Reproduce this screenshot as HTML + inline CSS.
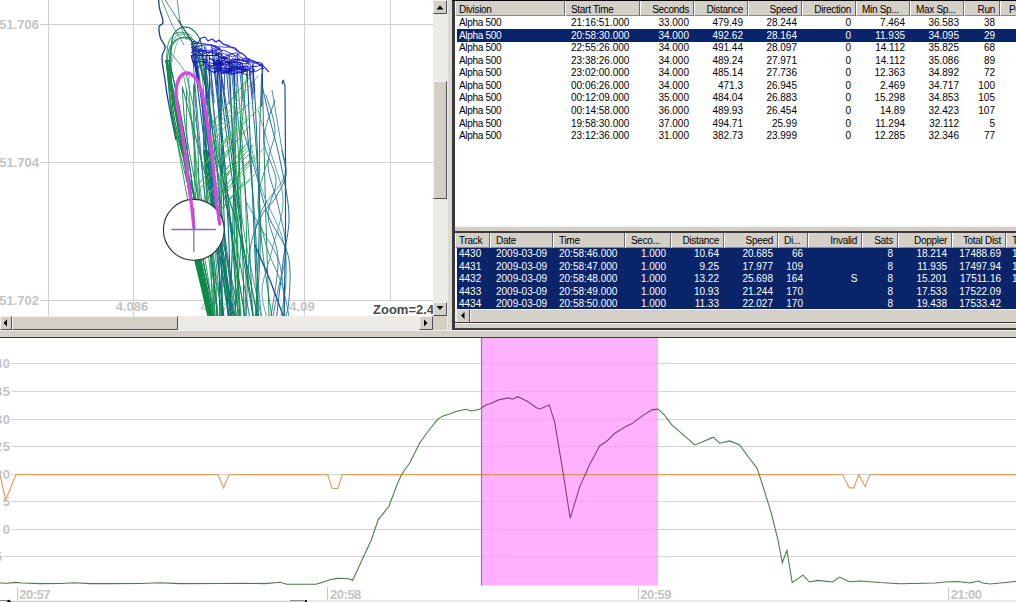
<!DOCTYPE html>
<html><head><meta charset="utf-8">
<style>
*{box-sizing:border-box}
body{margin:0;width:1016px;height:602px;overflow:hidden;position:relative;background:#d4d0c8;font-family:"Liberation Sans",sans-serif}
.a{position:absolute}
.chk{background-color:#e6e3dc;background-image:linear-gradient(45deg,#f4f3ef 25%,transparent 25%,transparent 75%,#f4f3ef 75%),linear-gradient(45deg,#f4f3ef 25%,transparent 25%,transparent 75%,#f4f3ef 75%);background-size:2px 2px;background-position:0 0,1px 1px}
.btn{background:#d4d0c8;border-top:1px solid #f4f2ee;border-left:1px solid #f4f2ee;border-right:1px solid #505050;border-bottom:1px solid #505050}
.hc{background:#d4d0c8;border-left:1px solid #fff;border-right:1px solid #6a6a6a;border-bottom:1px solid #8a8a8a}
.tx{font-size:10px;line-height:12px;height:12px;white-space:nowrap;color:#000}
.sel{background:#0a246a}
.gl{font-size:13px;line-height:13px;color:#c4c4c4;font-weight:bold;white-space:nowrap}
</style></head><body>
<div class="a" style="left:0;top:0;width:1016px;height:602px;overflow:hidden">

<div class="a" style="left:0;top:0;width:433px;height:316px;background:#fff;overflow:hidden">
<svg width="433" height="316" style="position:absolute;left:0;top:0">
<line x1="48.5" y1="0" x2="48.5" y2="316" stroke="#d0d0d0" stroke-width="1"/>
<line x1="133.5" y1="0" x2="133.5" y2="316" stroke="#d0d0d0" stroke-width="1"/>
<line x1="219.5" y1="0" x2="219.5" y2="316" stroke="#d0d0d0" stroke-width="1"/>
<line x1="304.5" y1="0" x2="304.5" y2="316" stroke="#d0d0d0" stroke-width="1"/>
<line x1="390.5" y1="0" x2="390.5" y2="316" stroke="#d0d0d0" stroke-width="1"/>
<line x1="40" y1="24.5" x2="433" y2="24.5" stroke="#d0d0d0" stroke-width="1"/>
<line x1="40" y1="162.5" x2="433" y2="162.5" stroke="#d0d0d0" stroke-width="1"/>
<line x1="40" y1="300.5" x2="433" y2="300.5" stroke="#d0d0d0" stroke-width="1"/>
</svg>
<div class="a gl" style="right:394px;top:18.0px">51.706</div>
<div class="a gl" style="right:394px;top:156.0px">51.704</div>
<div class="a gl" style="right:394px;top:294.0px">51.702</div>
<div class="a gl" style="left:92px;width:80px;text-align:center;top:300px">4.086</div>
<div class="a gl" style="left:177px;width:80px;text-align:center;top:300px">4.088</div>
<div class="a gl" style="left:262px;width:80px;text-align:center;top:300px">4.09</div>
<div class="a gl" style="left:348px;width:80px;text-align:center;top:300px">4.092</div>
<svg width="433" height="316" style="position:absolute;left:0;top:0">
<defs>
<linearGradient id="gA" gradientUnits="userSpaceOnUse" x1="0" y1="0" x2="0" y2="316"><stop offset="0" stop-color="#1a6a80"/><stop offset="0.25" stop-color="#0a7a60"/><stop offset="0.5" stop-color="#0a8a48"/><stop offset="1" stop-color="#0a8a40"/></linearGradient>
<linearGradient id="gB" gradientUnits="userSpaceOnUse" x1="0" y1="0" x2="0" y2="316"><stop offset="0.12" stop-color="#1818c8"/><stop offset="0.26" stop-color="#1a4aa8"/><stop offset="0.45" stop-color="#0a7078"/><stop offset="1" stop-color="#0a8060"/></linearGradient>
<linearGradient id="gC" gradientUnits="userSpaceOnUse" x1="0" y1="0" x2="0" y2="316"><stop offset="0.12" stop-color="#1020c0"/><stop offset="0.3" stop-color="#10609a"/><stop offset="1" stop-color="#10708a"/></linearGradient>
<linearGradient id="gD" gradientUnits="userSpaceOnUse" x1="0" y1="0" x2="0" y2="316"><stop offset="0" stop-color="#1a70a0"/><stop offset="0.3" stop-color="#18a050"/><stop offset="1" stop-color="#18a048"/></linearGradient>
<linearGradient id="gE" gradientUnits="userSpaceOnUse" x1="0" y1="0" x2="0" y2="316"><stop offset="0.1" stop-color="#2030b0"/><stop offset="0.35" stop-color="#0a6a78"/><stop offset="1" stop-color="#0a7a58"/></linearGradient>
</defs>
<polyline fill="none" stroke="#203a88" stroke-width="1.30" stroke-opacity="1.0" stroke-linejoin="round" points="158.5,-2.0 158.6,-0.7 158.7,1.1 158.9,3.2 159.1,5.6 159.5,8.0 160.2,10.7 161.1,13.7 162.0,16.9 162.7,19.7 163.0,22.0 162.6,23.5 161.7,24.4 160.6,25.0 159.6,25.8 159.0,27.0 158.9,28.8 159.1,31.1 159.4,33.5 159.9,35.8 160.5,38.0 161.3,39.9 162.4,41.6 163.6,43.4 164.5,45.1 165.0,47.0 164.8,48.9 164.1,50.7 163.1,52.7 162.3,55.1 162.0,58.0 162.2,61.7 162.8,66.1 163.5,70.8 164.3,75.6 165.0,80.0 165.5,83.8 166.0,87.2 166.4,90.7 167.1,94.8 168.0,100.0 169.4,107.4 171.2,116.5 173.1,125.9 174.8,134.2 176.0,140.0"/>
<polyline fill="none" stroke="#3a7a80" stroke-width="0.90" stroke-opacity="1.0" stroke-linejoin="round" points="164.0,-2.0 178.0,20.0 191.0,40.0 197.0,52.0"/>
<polyline fill="none" stroke="#3a8a80" stroke-width="0.90" stroke-opacity="1.0" stroke-linejoin="round" points="177.0,-2.0 179.0,15.0 182.0,30.0 187.0,40.0"/>
<polyline fill="none" stroke="#407a80" stroke-width="0.80" stroke-opacity="1.0" stroke-linejoin="round" points="161.0,-2.0 172.0,25.0 184.0,45.0"/>
<polyline fill="none" stroke="#20a050" stroke-width="0.87" stroke-opacity="1.0" stroke-linejoin="round" points="194.4,210.0 192.3,199.7 189.3,185.2 185.8,168.1 182.2,150.4 178.9,133.7 176.4,120.0 174.6,109.1 173.2,99.4 172.1,90.9 171.3,83.3 170.7,76.4 170.2,70.0 169.9,64.3 169.9,59.6 170.0,55.5 170.3,52.0 170.7,48.9 171.2,46.0 171.8,43.4 172.6,41.3 173.4,39.6 174.4,38.2 175.3,37.0 176.3,36.0 177.2,35.1 178.2,34.5 179.3,34.2 180.3,34.0 181.3,33.9 182.4,34.0 183.4,34.1 184.4,34.3 185.4,34.7 186.4,35.2 187.4,36.0 188.4,37.0 189.5,38.3 190.6,39.9 191.7,41.8 192.7,43.8 193.7,45.9 194.5,48.0 195.2,49.9 195.7,51.7 196.1,53.6 196.6,55.8 197.0,58.5 197.5,62.0 198.1,66.0 198.7,70.4 199.4,75.3 200.0,80.9 200.8,87.4 201.5,95.0 202.2,103.8 202.8,113.7 203.4,124.6 204.3,136.0 205.4,147.9 206.9,160.0 209.1,172.4 211.8,185.5 214.8,198.9 217.9,212.6 220.9,226.4 223.5,240.0 226.0,254.5 228.4,270.2 230.8,286.0 232.9,300.7 234.7,313.1 236.0,322.0"/>
<polyline fill="none" stroke="#108048" stroke-width="1.17" stroke-opacity="1.0" stroke-linejoin="round" points="197.4,210.0 194.7,199.7 190.8,185.2 186.3,168.1 181.7,150.4 177.6,133.7 174.7,120.0 172.9,109.1 171.9,99.7 171.4,91.3 171.2,83.8 171.2,76.8 171.1,70.0 170.9,63.5 170.9,57.5 171.0,52.1 171.2,47.2 171.6,42.9 172.1,39.2 172.8,36.2 173.8,34.0 174.9,32.4 176.1,31.1 177.3,30.1 178.4,29.2 179.6,28.3 180.8,27.7 182.1,27.3 183.3,27.2 184.6,27.1 185.8,27.2 187.0,27.3 188.2,27.5 189.5,27.8 190.7,28.4 191.9,29.1 193.1,30.2 194.4,31.4 195.7,32.9 197.1,34.5 198.4,36.5 199.5,38.7 200.5,41.2 201.2,43.9 201.8,46.9 202.2,50.2 202.6,53.8 203.0,57.7 203.5,62.0 204.0,66.4 204.5,70.9 205.0,75.7 205.6,81.2 206.4,87.5 207.5,95.0 208.7,103.8 210.0,113.7 211.5,124.6 213.3,136.0 215.4,147.9 217.9,160.0 221.1,172.4 224.9,185.5 229.1,198.9 233.4,212.6 237.5,226.4 241.2,240.0 244.6,254.5 248.1,270.2 251.4,286.0 254.3,300.7 256.8,313.1 258.6,322.0"/>
<polyline fill="none" stroke="#1a9a58" stroke-width="1.02" stroke-opacity="1.0" stroke-linejoin="round" points="194.0,210.0 191.5,199.7 187.9,185.2 183.6,168.1 179.4,150.4 175.5,133.7 172.7,120.0 170.9,109.0 169.7,99.3 168.9,90.6 168.5,83.0 168.2,76.1 167.9,70.0 167.7,64.8 167.6,60.7 167.7,57.5 167.9,54.8 168.4,52.4 168.9,49.9 169.7,47.6 170.8,45.6 172.0,43.8 173.3,42.3 174.6,41.0 175.9,39.9 177.1,39.1 178.4,38.5 179.8,38.1 181.1,37.9 182.5,37.9 183.8,37.9 185.1,38.1 186.4,38.3 187.8,38.6 189.1,39.2 190.4,39.9 191.7,40.9 193.1,42.3 194.5,44.1 196.0,46.0 197.4,48.1 198.6,50.1 199.6,51.9 200.4,53.4 201.0,54.5 201.4,55.6 201.8,57.0 202.1,59.0 202.6,62.0 203.2,65.8 203.7,70.1 204.3,75.1 205.0,80.8 205.7,87.4 206.6,95.0 207.6,103.8 208.6,113.7 209.8,124.6 211.1,136.0 212.8,147.9 214.9,160.0 217.7,172.4 221.0,185.5 224.7,198.9 228.4,212.6 232.0,226.4 235.3,240.0 238.3,254.5 241.3,270.2 244.2,286.0 246.8,300.7 248.9,313.1 250.5,322.0"/>
<polyline fill="none" stroke="#0e8a50" stroke-width="0.98" stroke-opacity="1.0" stroke-linejoin="round" points="199.2,210.0 196.2,199.7 191.7,185.2 186.4,168.1 181.2,150.4 176.5,133.7 173.2,120.0 171.3,109.0 170.2,99.3 169.8,90.7 169.8,83.0 169.9,76.2 169.8,70.0 169.7,64.7 169.6,60.5 169.7,57.2 169.9,54.3 170.3,51.8 170.8,49.3 171.6,46.9 172.7,44.9 173.9,43.1 175.2,41.7 176.5,40.4 177.8,39.3 179.0,38.5 180.3,37.9 181.7,37.5 183.0,37.3 184.4,37.3 185.7,37.3 187.0,37.4 188.3,37.7 189.7,38.0 191.0,38.5 192.3,39.3 193.6,40.3 195.0,41.7 196.5,43.4 197.9,45.3 199.3,47.4 200.5,49.4 201.6,51.3 202.3,52.9 202.9,54.1 203.3,55.3 203.7,56.8 204.1,58.9 204.6,62.0 205.2,65.8 206.1,70.2 207.0,75.1 207.7,80.8 208.3,87.4 208.6,95.0 208.3,103.8 207.6,113.7 206.8,124.6 205.9,136.0 205.2,147.9 205.0,160.0 205.4,172.4 206.0,185.5 206.9,198.9 207.9,212.6 208.9,226.4 209.7,240.0 210.4,254.5 211.1,270.2 211.7,286.0 212.3,300.7 212.8,313.1 213.2,322.0"/>
<polyline fill="none" stroke="#108048" stroke-width="0.83" stroke-opacity="1.0" stroke-linejoin="round" points="189.5,210.0 187.6,199.7 185.0,185.2 181.9,168.1 178.7,150.4 175.8,133.7 173.5,120.0 171.8,109.1 170.4,99.5 169.3,91.0 168.3,83.4 167.6,76.5 167.1,70.0 166.8,64.1 166.7,59.1 166.8,54.7 167.1,50.8 167.5,47.4 168.1,44.3 168.8,41.7 169.8,39.5 170.9,37.9 172.1,36.5 173.3,35.4 174.5,34.3 175.7,33.5 176.9,32.9 178.2,32.5 179.4,32.3 180.7,32.3 182.0,32.3 183.2,32.4 184.4,32.7 185.7,33.0 186.9,33.6 188.1,34.3 189.4,35.3 190.7,36.6 192.0,38.2 193.4,40.0 194.7,42.0 195.8,44.1 196.8,46.3 197.6,48.5 198.1,50.6 198.5,52.8 198.9,55.3 199.3,58.3 199.8,62.0 200.5,66.1 201.2,70.5 202.0,75.4 202.7,81.0 203.3,87.4 203.8,95.0 204.0,103.8 203.9,113.7 203.6,124.6 203.5,136.0 203.6,147.9 204.2,160.0 205.3,172.4 206.8,185.5 208.6,198.9 210.5,212.6 212.4,226.4 214.0,240.0 215.4,254.5 216.9,270.2 218.3,286.0 219.5,300.7 220.6,313.1 221.3,322.0"/>
<polyline fill="none" stroke="#70b0a8" stroke-width="0.80" stroke-opacity="1.0" stroke-linejoin="round" points="172.0,62.0 172.6,59.4 173.5,55.7 174.5,51.4 175.6,47.0 176.8,43.1 178.0,40.0 179.2,37.8 180.6,36.2 181.9,34.9 183.3,34.0 184.7,33.4 186.0,33.0 187.3,33.0 188.7,33.4 190.0,34.1 191.2,34.9 192.2,35.6 193.0,36.0"/>
<polyline fill="none" stroke="#3a8a80" stroke-width="0.80" stroke-opacity="1.0" stroke-linejoin="round" points="165.0,45.0 178.0,62.0 190.0,78.0"/>
<polyline fill="none" stroke="#0a8a48" stroke-width="0.95" stroke-opacity="1.0" stroke-linejoin="round" points="166.2,60.0 166.5,61.9 166.9,64.4 167.4,67.5 168.0,71.1 168.7,75.3 169.6,80.0 170.7,85.5 172.0,91.9 173.4,98.8 174.8,105.9 176.3,113.1 177.6,120.0 178.8,126.7 180.0,133.3 181.2,140.0 182.4,146.7 183.5,153.3 184.6,160.0 185.6,166.5 186.6,172.8 187.6,179.1 188.6,185.6 189.6,192.5 190.7,200.0 192.0,208.5 193.3,217.9 194.7,227.7 196.1,237.4 197.5,246.7 198.9,255.0 200.3,262.3 201.7,268.9 203.2,275.1 204.6,280.9 206.0,286.4 207.2,292.0 208.2,297.8 209.3,303.6 210.2,309.3 211.1,314.5 211.8,318.8 212.3,322.0"/>
<polyline fill="none" stroke="#0a7a58" stroke-width="0.98" stroke-opacity="1.0" stroke-linejoin="round" points="167.1,60.0 167.5,61.9 168.0,64.4 168.6,67.5 169.3,71.1 170.2,75.3 171.1,80.0 172.2,85.5 173.5,91.9 174.9,98.8 176.4,105.9 177.8,113.1 179.1,120.0 180.4,126.7 181.6,133.3 182.7,140.0 183.9,146.7 185.0,153.3 186.1,160.0 187.2,166.5 188.1,172.8 189.1,179.1 190.0,185.6 191.0,192.5 192.1,200.0 193.3,208.5 194.6,217.9 196.0,227.7 197.4,237.4 198.7,246.7 200.1,255.0 201.5,262.3 202.9,268.9 204.3,275.1 205.6,280.9 206.9,286.4 208.1,292.0 209.1,297.8 210.1,303.6 211.1,309.3 211.9,314.5 212.6,318.8 213.1,322.0"/>
<polyline fill="none" stroke="#0a7a58" stroke-width="1.02" stroke-opacity="1.0" stroke-linejoin="round" points="168.5,60.0 169.1,61.9 169.7,64.4 170.6,67.5 171.5,71.1 172.5,75.3 173.6,80.0 174.8,85.5 176.1,91.9 177.5,98.8 178.9,105.9 180.3,113.1 181.6,120.0 182.8,126.7 184.0,133.3 185.2,140.0 186.4,146.7 187.5,153.3 188.6,160.0 189.6,166.5 190.5,172.8 191.4,179.1 192.3,185.6 193.3,192.5 194.3,200.0 195.5,208.5 196.8,217.9 198.1,227.7 199.4,237.4 200.8,246.7 202.1,255.0 203.4,262.3 204.7,268.9 206.0,275.1 207.3,280.9 208.5,286.4 209.5,292.0 210.6,297.8 211.5,303.6 212.4,309.3 213.2,314.5 213.8,318.8 214.3,322.0"/>
<polyline fill="none" stroke="#0a7a58" stroke-width="1.03" stroke-opacity="1.0" stroke-linejoin="round" points="168.6,60.0 169.2,61.9 169.9,64.4 170.7,67.5 171.6,71.1 172.7,75.3 173.7,80.0 174.9,85.5 176.2,91.9 177.6,98.8 179.0,105.9 180.4,113.1 181.7,120.0 183.0,126.7 184.2,133.3 185.4,140.0 186.5,146.7 187.7,153.3 188.7,160.0 189.8,166.5 190.7,172.8 191.6,179.1 192.5,185.6 193.4,192.5 194.5,200.0 195.6,208.5 196.9,217.9 198.2,227.7 199.6,237.4 200.9,246.7 202.2,255.0 203.5,262.3 204.8,268.9 206.1,275.1 207.4,280.9 208.6,286.4 209.6,292.0 210.6,297.8 211.6,303.6 212.5,309.3 213.3,314.5 213.9,318.8 214.4,322.0"/>
<polyline fill="none" stroke="#0e9048" stroke-width="0.91" stroke-opacity="1.0" stroke-linejoin="round" points="167.1,60.0 167.5,61.9 168.0,64.4 168.6,67.5 169.4,71.1 170.2,75.3 171.2,80.0 172.3,85.5 173.6,91.9 175.0,98.8 176.4,105.9 177.8,113.1 179.2,120.0 180.4,126.7 181.6,133.3 182.8,140.0 183.9,146.7 185.1,153.3 186.2,160.0 187.2,166.5 188.2,172.8 189.1,179.1 190.0,185.6 191.0,192.5 192.1,200.0 193.4,208.5 194.7,217.9 196.0,227.7 197.4,237.4 198.8,246.7 200.1,255.0 201.5,262.3 202.9,268.9 204.3,275.1 205.7,280.9 206.9,286.4 208.1,292.0 209.2,297.8 210.2,303.6 211.1,309.3 211.9,314.5 212.6,318.8 213.1,322.0"/>
<polyline fill="none" stroke="#0a7a58" stroke-width="0.90" stroke-opacity="1.0" stroke-linejoin="round" points="165.8,60.0 166.1,61.9 166.5,64.4 166.9,67.5 167.5,71.1 168.2,75.3 169.0,80.0 170.1,85.5 171.4,91.9 172.8,98.8 174.2,105.9 175.7,113.1 177.0,120.0 178.2,126.7 179.5,133.3 180.6,140.0 181.8,146.7 182.9,153.3 184.0,160.0 185.1,166.5 186.1,172.8 187.0,179.1 188.0,185.6 189.1,192.5 190.2,200.0 191.5,208.5 192.8,217.9 194.2,227.7 195.6,237.4 197.0,246.7 198.4,255.0 199.8,262.3 201.3,268.9 202.8,275.1 204.2,280.9 205.6,286.4 206.8,292.0 207.9,297.8 209.0,303.6 209.9,309.3 210.8,314.5 211.5,318.8 212.0,322.0"/>
<polyline fill="none" stroke="#108050" stroke-width="1.13" stroke-opacity="1.0" stroke-linejoin="round" points="165.7,60.0 166.0,61.9 166.4,64.4 166.8,67.5 167.4,71.1 168.0,75.3 168.9,80.0 170.0,85.5 171.2,91.9 172.6,98.8 174.1,105.9 175.6,113.1 176.9,120.0 178.1,126.7 179.3,133.3 180.5,140.0 181.6,146.7 182.8,153.3 183.9,160.0 184.9,166.5 185.9,172.8 186.9,179.1 187.9,185.6 189.0,192.5 190.1,200.0 191.3,208.5 192.7,217.9 194.1,227.7 195.5,237.4 196.9,246.7 198.3,255.0 199.7,262.3 201.2,268.9 202.7,275.1 204.2,280.9 205.5,286.4 206.7,292.0 207.8,297.8 208.9,303.6 209.9,309.3 210.7,314.5 211.4,318.8 211.9,322.0"/>
<polyline fill="none" stroke="#0a8a48" stroke-width="0.97" stroke-opacity="1.0" stroke-linejoin="round" points="166.6,60.0 166.9,61.9 167.4,64.4 167.9,67.5 168.6,71.1 169.3,75.3 170.3,80.0 171.3,85.5 172.6,91.9 174.0,98.8 175.5,105.9 176.9,113.1 178.3,120.0 179.5,126.7 180.7,133.3 181.9,140.0 183.0,146.7 184.2,153.3 185.3,160.0 186.3,166.5 187.3,172.8 188.2,179.1 189.2,185.6 190.2,192.5 191.3,200.0 192.6,208.5 193.9,217.9 195.2,227.7 196.6,237.4 198.0,246.7 199.4,255.0 200.8,262.3 202.2,268.9 203.7,275.1 205.1,280.9 206.4,286.4 207.6,292.0 208.6,297.8 209.7,303.6 210.6,309.3 211.4,314.5 212.1,318.8 212.6,322.0"/>
<polyline fill="none" stroke="#0e9048" stroke-width="1.23" stroke-opacity="1.0" stroke-linejoin="round" points="166.1,60.0 166.4,61.9 166.8,64.4 167.2,67.5 167.8,71.1 168.6,75.3 169.4,80.0 170.5,85.5 171.8,91.9 173.2,98.8 174.7,105.9 176.1,113.1 177.4,120.0 178.7,126.7 179.9,133.3 181.1,140.0 182.2,146.7 183.3,153.3 184.4,160.0 185.5,166.5 186.5,172.8 187.4,179.1 188.4,185.6 189.5,192.5 190.6,200.0 191.8,208.5 193.2,217.9 194.5,227.7 195.9,237.4 197.4,246.7 198.7,255.0 200.2,262.3 201.6,268.9 203.1,275.1 204.5,280.9 205.9,286.4 207.1,292.0 208.2,297.8 209.2,303.6 210.2,309.3 211.0,314.5 211.7,318.8 212.2,322.0"/>
<polyline fill="none" stroke="#0e8a48" stroke-width="5.50" stroke-opacity="1.0" stroke-linejoin="round" points="196.0,256.0 203.0,285.0 211.0,320.0"/>
<polyline fill="none" stroke="#0a7a58" stroke-width="1.37" stroke-opacity="1.0" stroke-linejoin="round" points="204.0,150.0 204.7,155.4 205.8,163.0 207.0,171.9 208.3,181.5 209.7,191.1 211.0,200.0 212.3,208.4 213.7,217.0 215.1,225.6 216.4,234.1 217.8,242.2 219.0,250.0 220.1,257.3 221.2,264.4 222.2,271.1 223.1,277.6 224.1,283.9 225.0,290.0 225.9,296.2 226.9,302.4 227.9,308.5 228.7,314.0 229.5,318.6 230.0,322.0"/>
<polyline fill="none" stroke="#0a8a48" stroke-width="1.03" stroke-opacity="1.0" stroke-linejoin="round" points="203.5,150.0 204.2,155.4 205.3,163.0 206.5,171.9 207.8,181.5 209.2,191.1 210.5,200.0 211.8,208.4 213.1,217.0 214.5,225.6 215.9,234.1 217.2,242.2 218.5,250.0 219.6,257.3 220.7,264.4 221.7,271.1 222.6,277.6 223.6,283.9 224.5,290.0 225.4,296.2 226.4,302.4 227.3,308.5 228.2,314.0 228.9,318.6 229.5,322.0"/>
<polyline fill="none" stroke="#10a050" stroke-width="1.15" stroke-opacity="1.0" stroke-linejoin="round" points="206.9,150.0 207.6,155.4 208.7,163.0 209.9,171.9 211.2,181.5 212.6,191.1 213.9,200.0 215.2,208.4 216.5,217.0 217.9,225.6 219.3,234.1 220.7,242.2 221.9,250.0 223.0,257.3 224.1,264.4 225.1,271.1 226.0,277.6 227.0,283.9 227.9,290.0 228.8,296.2 229.8,302.4 230.8,308.5 231.6,314.0 232.3,318.6 232.9,322.0"/>
<polyline fill="none" stroke="#0a7a58" stroke-width="1.21" stroke-opacity="1.0" stroke-linejoin="round" points="206.1,150.0 206.9,155.4 207.9,163.0 209.1,171.9 210.4,181.5 211.8,191.1 213.1,200.0 214.4,208.4 215.8,217.0 217.2,225.6 218.5,234.1 219.9,242.2 221.1,250.0 222.2,257.3 223.3,264.4 224.3,271.1 225.2,277.6 226.2,283.9 227.1,290.0 228.0,296.2 229.0,302.4 230.0,308.5 230.8,314.0 231.6,318.6 232.1,322.0"/>
<polyline fill="none" stroke="#0a8a48" stroke-width="1.16" stroke-opacity="1.0" stroke-linejoin="round" points="205.9,150.0 206.7,155.4 207.7,163.0 208.9,171.9 210.3,181.5 211.6,191.1 212.9,200.0 214.2,208.4 215.6,217.0 217.0,225.6 218.4,234.1 219.7,242.2 220.9,250.0 222.1,257.3 223.1,264.4 224.1,271.1 225.1,277.6 226.0,283.9 226.9,290.0 227.9,296.2 228.9,302.4 229.8,308.5 230.7,314.0 231.4,318.6 231.9,322.0"/>
<polyline fill="none" stroke="#0a7a58" stroke-width="1.24" stroke-opacity="1.0" stroke-linejoin="round" points="207.9,150.0 208.7,155.4 209.7,163.0 210.9,171.9 212.3,181.5 213.6,191.1 214.9,200.0 216.2,208.4 217.6,217.0 219.0,225.6 220.4,234.1 221.7,242.2 222.9,250.0 224.1,257.3 225.1,264.4 226.1,271.1 227.1,277.6 228.0,283.9 228.9,290.0 229.9,296.2 230.9,302.4 231.8,308.5 232.7,314.0 233.4,318.6 233.9,322.0"/>
<polyline fill="none" stroke="#1a9a58" stroke-width="0.93" stroke-opacity="1.0" stroke-linejoin="round" points="194.1,82.3 194.1,85.7 194.0,90.1 193.9,95.2 193.8,101.1 193.8,107.5 193.8,114.5 194.0,121.8 194.2,129.4 194.6,137.6 194.9,146.7 195.4,156.5 195.9,166.7 196.6,176.9 197.4,186.9 198.3,196.3 199.4,205.0 200.8,212.8 202.6,220.0 204.5,226.8 206.6,233.4 208.7,239.8 210.5,246.2 212.1,252.9 213.2,260.0 213.8,267.8 214.0,276.5 214.0,285.5 213.8,294.4 213.4,303.0 213.1,310.7 212.8,317.2 212.6,322.0"/>
<polyline fill="none" stroke="#1a9a58" stroke-width="0.93" stroke-opacity="1.0" stroke-linejoin="round" points="186.5,88.5 186.5,91.8 186.5,95.9 186.4,100.8 186.4,106.3 186.4,112.4 186.4,119.0 186.5,125.9 186.8,133.1 187.1,140.9 187.4,149.6 187.8,158.8 188.3,168.4 188.9,178.1 189.5,187.6 190.4,196.6 191.4,205.0 192.7,212.6 194.3,219.8 196.0,226.6 197.9,233.1 199.8,239.6 201.7,246.2 203.4,252.9 205.0,260.0 206.4,267.8 207.9,276.5 209.3,285.5 210.6,294.4 211.9,303.0 213.0,310.7 213.9,317.2 214.6,322.0"/>
<polyline fill="none" stroke="#20a050" stroke-width="0.81" stroke-opacity="1.0" stroke-linejoin="round" points="182.7,71.7 183.5,75.5 184.5,80.2 185.7,85.9 187.1,92.3 188.5,99.3 189.8,106.9 191.1,114.8 192.2,123.0 193.1,132.0 193.8,142.0 194.4,152.7 195.0,163.8 195.6,174.9 196.4,185.7 197.3,195.8 198.5,205.0 199.9,213.1 201.7,220.5 203.6,227.3 205.6,233.7 207.7,240.0 209.7,246.4 211.6,253.0 213.3,260.0 214.8,267.8 216.4,276.5 217.9,285.5 219.3,294.4 220.5,303.0 221.7,310.7 222.6,317.2 223.4,322.0"/>
<polyline fill="none" stroke="#2a7a80" stroke-width="1.04" stroke-opacity="1.0" stroke-linejoin="round" points="182.2,86.3 183.1,89.6 184.2,93.8 185.6,98.8 187.1,104.4 188.8,110.7 190.5,117.4 192.4,124.4 194.3,131.8 196.3,139.7 198.6,148.5 200.9,158.0 203.4,167.8 205.9,177.6 208.3,187.3 210.6,196.5 212.8,205.0 214.8,212.7 216.7,219.9 218.6,226.7 220.4,233.2 222.1,239.7 223.9,246.2 225.6,252.9 227.3,260.0 229.1,267.8 231.1,276.5 233.0,285.5 235.0,294.4 236.8,303.0 238.4,310.7 239.7,317.2 240.8,322.0"/>
<polyline fill="none" stroke="#108a60" stroke-width="0.98" stroke-opacity="1.0" stroke-linejoin="round" points="194.1,85.0 194.4,88.4 194.7,92.6 195.1,97.7 195.5,103.4 196.0,109.7 196.5,116.5 196.9,123.6 197.4,131.0 197.7,139.1 198.0,148.0 198.2,157.5 198.4,167.4 198.7,177.4 199.1,187.2 199.8,196.5 200.7,205.0 201.9,212.7 203.6,219.9 205.4,226.7 207.4,233.2 209.4,239.7 211.3,246.2 212.9,252.9 214.1,260.0 215.0,267.8 215.6,276.5 216.1,285.5 216.3,294.4 216.5,303.0 216.6,310.7 216.7,317.2 216.8,322.0"/>
<polyline fill="none" stroke="#2a7a80" stroke-width="0.99" stroke-opacity="1.0" stroke-linejoin="round" points="182.2,88.0 182.5,91.3 182.7,95.4 183.0,100.3 183.4,105.9 183.8,112.0 184.4,118.6 185.2,125.6 186.2,132.8 187.4,140.6 188.9,149.3 190.6,158.6 192.4,168.3 194.2,178.0 196.1,187.5 197.9,196.6 199.6,205.0 201.2,212.6 202.9,219.8 204.6,226.6 206.3,233.1 207.9,239.6 209.3,246.2 210.6,252.9 211.7,260.0 212.6,267.8 213.2,276.5 213.7,285.5 214.0,294.4 214.3,303.0 214.5,310.7 214.7,317.2 214.8,322.0"/>
<polyline fill="none" stroke="#0e8a50" stroke-width="0.84" stroke-opacity="1.0" stroke-linejoin="round" points="193.6,84.6 193.6,88.0 193.6,92.2 193.6,97.3 193.7,103.0 193.7,109.4 193.7,116.2 193.8,123.3 194.0,130.8 194.1,138.8 194.2,147.8 194.2,157.4 194.3,167.3 194.5,177.3 194.9,187.1 195.5,196.4 196.4,205.0 197.7,212.7 199.2,219.9 201.1,226.7 203.0,233.3 205.1,239.7 207.2,246.2 209.2,252.9 211.0,260.0 212.9,267.8 214.8,276.5 216.8,285.5 218.7,294.4 220.5,303.0 222.1,310.7 223.5,317.2 224.5,322.0"/>
<polyline fill="none" stroke="#2a7a80" stroke-width="0.84" stroke-opacity="1.0" stroke-linejoin="round" points="186.4,74.7 187.1,78.3 188.2,83.0 189.4,88.5 190.8,94.7 192.3,101.6 193.8,109.0 195.2,116.8 196.5,124.8 197.8,133.6 199.0,143.3 200.3,153.8 201.6,164.6 202.8,175.4 203.9,186.0 205.0,196.0 206.0,205.0 206.9,213.0 207.7,220.4 208.4,227.2 209.1,233.6 209.7,240.0 210.4,246.3 211.0,253.0 211.8,260.0 212.6,267.8 213.5,276.5 214.5,285.5 215.5,294.4 216.4,303.0 217.2,310.7 217.9,317.2 218.4,322.0"/>
<polyline fill="none" stroke="#20a050" stroke-width="0.86" stroke-opacity="1.0" stroke-linejoin="round" points="188.6,78.1 188.8,81.7 189.0,86.2 189.3,91.5 189.6,97.6 190.0,104.3 190.5,111.5 191.1,119.0 191.9,126.9 192.9,135.4 194.1,144.9 195.4,155.0 196.9,165.5 198.4,176.1 199.8,186.4 201.2,196.1 202.3,205.0 203.4,212.9 204.3,220.2 205.1,227.0 205.9,233.5 206.7,239.9 207.4,246.3 208.2,252.9 209.0,260.0 209.9,267.8 210.9,276.5 211.9,285.5 212.9,294.4 213.9,303.0 214.8,310.7 215.5,317.2 216.0,322.0"/>
<polyline fill="none" stroke="url(#gB)" stroke-width="1.07" stroke-opacity="1.0" stroke-linejoin="round" points="247.1,68.2 247.2,71.8 247.4,76.3 247.6,81.5 247.9,87.3 248.2,93.7 248.5,100.5 248.8,107.6 249.1,114.9 249.4,122.2 249.7,129.6 250.0,136.8 250.3,143.8 250.6,150.7 250.9,157.7 251.2,164.9 251.5,172.1 251.8,179.5 252.2,186.9 252.5,194.4 252.8,201.9 253.1,209.4 253.4,216.9 253.7,224.4 254.1,231.9 254.4,239.6 254.7,247.8 255.1,256.4 255.4,265.1 255.8,273.9 256.1,282.4 256.4,290.7 256.8,298.6 257.0,305.8 257.3,312.2 257.5,317.6 257.7,322.0"/>
<polyline fill="none" stroke="url(#gE)" stroke-width="1.09" stroke-opacity="1.0" stroke-linejoin="round" points="195.1,56.4 195.7,60.2 196.4,64.9 197.3,70.3 198.2,76.5 199.3,83.1 200.4,90.2 201.6,97.6 202.7,105.3 203.9,113.0 205.0,120.7 206.1,128.2 207.0,135.5 208.0,142.7 209.0,150.1 210.0,157.6 211.0,165.2 212.0,172.9 212.9,180.7 213.9,188.5 214.8,196.4 215.6,204.2 216.4,212.1 217.1,220.0 217.7,227.8 218.1,235.8 218.5,244.4 218.9,253.4 219.1,262.5 219.3,271.7 219.5,280.6 219.6,289.3 219.6,297.5 219.7,305.0 219.8,311.7 219.8,317.4 219.9,322.0"/>
<polyline fill="none" stroke="url(#gE)" stroke-width="1.14" stroke-opacity="1.0" stroke-linejoin="round" points="234.4,61.5 234.4,65.2 234.4,69.7 234.4,75.1 234.3,81.1 234.3,87.6 234.3,94.6 234.3,101.9 234.2,109.3 234.2,116.9 234.1,124.4 234.1,131.9 234.0,139.0 234.0,146.1 233.9,153.3 233.8,160.7 233.8,168.1 233.7,175.7 233.6,183.3 233.5,191.0 233.4,198.7 233.3,206.4 233.1,214.2 233.0,221.9 232.8,229.5 232.6,237.4 232.3,245.9 232.1,254.7 231.8,263.6 231.4,272.6 231.1,281.4 230.8,289.9 230.5,297.9 230.2,305.3 230.0,311.9 229.8,317.5 229.6,322.0"/>
<polyline fill="none" stroke="url(#gB)" stroke-width="1.02" stroke-opacity="1.0" stroke-linejoin="round" points="215.0,66.4 215.3,70.0 215.8,74.5 216.3,79.8 216.9,85.6 217.6,92.0 218.3,98.9 219.0,106.0 219.8,113.3 220.5,120.8 221.3,128.2 222.0,135.4 222.7,142.5 223.4,149.4 224.1,156.5 224.8,163.7 225.5,171.0 226.3,178.5 227.0,185.9 227.7,193.5 228.5,201.0 229.2,208.6 229.9,216.2 230.6,223.7 231.2,231.2 231.9,239.0 232.6,247.3 233.3,255.9 234.0,264.7 234.7,273.5 235.4,282.2 236.1,290.5 236.7,298.4 237.2,305.6 237.7,312.1 238.2,317.6 238.5,322.0"/>
<polyline fill="none" stroke="url(#gD)" stroke-width="0.84" stroke-opacity="1.0" stroke-linejoin="round" points="216.1,50.4 216.3,54.3 216.5,59.1 216.7,64.7 216.9,70.9 217.2,77.7 217.5,85.0 217.8,92.6 218.1,100.4 218.4,108.2 218.7,116.1 219.0,123.8 219.2,131.3 219.5,138.7 219.7,146.2 220.0,153.9 220.2,161.7 220.4,169.6 220.7,177.5 220.9,185.5 221.1,193.6 221.3,201.6 221.4,209.7 221.5,217.7 221.6,225.7 221.6,233.9 221.6,242.7 221.6,251.9 221.5,261.2 221.4,270.5 221.3,279.7 221.2,288.6 221.0,296.9 220.9,304.6 220.8,311.5 220.7,317.3 220.7,322.0"/>
<polyline fill="none" stroke="url(#gD)" stroke-width="0.98" stroke-opacity="1.0" stroke-linejoin="round" points="197.6,46.3 198.4,50.3 199.4,55.1 200.5,60.8 201.8,67.1 203.2,74.0 204.6,81.4 206.1,89.1 207.7,97.0 209.2,105.0 210.8,113.0 212.3,120.9 213.7,128.4 215.0,135.9 216.5,143.6 217.9,151.4 219.4,159.3 220.8,167.3 222.3,175.4 223.7,183.5 225.1,191.6 226.5,199.8 227.8,208.0 229.0,216.1 230.2,224.2 231.4,232.6 232.5,241.5 233.7,250.8 234.8,260.3 235.8,269.8 236.8,279.1 237.8,288.1 238.7,296.6 239.5,304.4 240.2,311.3 240.9,317.3 241.4,322.0"/>
<polyline fill="none" stroke="url(#gA)" stroke-width="0.94" stroke-opacity="1.0" stroke-linejoin="round" points="262.1,65.8 262.2,69.4 262.3,73.9 262.4,79.2 262.5,85.1 262.7,91.5 262.8,98.3 263.0,105.5 263.2,112.8 263.4,120.3 263.6,127.7 263.7,135.0 263.9,142.0 264.1,149.0 264.3,156.1 264.5,163.3 264.6,170.7 264.8,178.1 265.0,185.6 265.2,193.2 265.4,200.7 265.6,208.3 265.8,215.9 266.1,223.5 266.3,231.0 266.5,238.8 266.8,247.1 267.1,255.8 267.3,264.6 267.6,273.4 267.9,282.1 268.2,290.4 268.5,298.3 268.7,305.6 268.9,312.1 269.1,317.6 269.3,322.0"/>
<polyline fill="none" stroke="url(#gC)" stroke-width="0.90" stroke-opacity="1.0" stroke-linejoin="round" points="221.7,51.2 221.7,55.1 221.7,59.8 221.6,65.4 221.6,71.6 221.5,78.4 221.5,85.7 221.5,93.2 221.4,101.0 221.4,108.9 221.3,116.7 221.3,124.4 221.3,131.9 221.3,139.2 221.3,146.7 221.3,154.4 221.2,162.1 221.2,170.0 221.2,177.9 221.2,185.9 221.2,193.9 221.2,202.0 221.3,210.0 221.3,218.0 221.4,225.9 221.4,234.2 221.5,242.9 221.7,252.1 221.8,261.4 221.9,270.7 222.1,279.8 222.2,288.7 222.4,297.0 222.5,304.7 222.6,311.5 222.7,317.4 222.8,322.0"/>
<polyline fill="none" stroke="url(#gD)" stroke-width="0.93" stroke-opacity="1.0" stroke-linejoin="round" points="235.6,56.9 235.9,60.7 236.3,65.4 236.7,70.8 237.3,76.9 237.8,83.6 238.4,90.7 239.0,98.1 239.6,105.7 240.2,113.4 240.7,121.0 241.3,128.6 241.7,135.9 242.2,143.1 242.7,150.4 243.1,157.9 243.6,165.5 244.1,173.2 244.5,180.9 245.0,188.8 245.4,196.6 245.7,204.5 246.0,212.3 246.2,220.1 246.4,227.9 246.5,236.0 246.5,244.6 246.4,253.5 246.3,262.6 246.1,271.7 245.9,280.7 245.7,289.4 245.5,297.5 245.3,305.1 245.1,311.7 245.0,317.4 244.9,322.0"/>
<polyline fill="none" stroke="url(#gD)" stroke-width="0.86" stroke-opacity="1.0" stroke-linejoin="round" points="228.0,64.2 228.3,67.9 228.6,72.4 228.9,77.7 229.3,83.6 229.8,90.1 230.2,97.0 230.8,104.2 231.3,111.6 231.9,119.1 232.5,126.5 233.1,133.9 233.7,141.0 234.4,148.0 235.1,155.1 235.7,162.4 236.5,169.8 237.2,177.2 238.0,184.8 238.8,192.4 239.7,200.0 240.6,207.7 241.6,215.3 242.7,222.9 243.8,230.5 245.1,238.3 246.7,246.7 248.3,255.4 250.1,264.2 252.0,273.1 253.8,281.8 255.6,290.3 257.4,298.2 259.0,305.5 260.4,312.0 261.6,317.6 262.5,322.0"/>
<polyline fill="none" stroke="url(#gB)" stroke-width="1.07" stroke-opacity="1.0" stroke-linejoin="round" points="219.6,63.3 219.7,67.0 219.8,71.6 220.0,76.9 220.1,82.8 220.3,89.3 220.5,96.2 220.7,103.5 220.9,110.9 221.1,118.4 221.3,125.9 221.5,133.2 221.7,140.3 221.9,147.4 222.1,154.5 222.3,161.9 222.5,169.3 222.8,176.8 223.0,184.3 223.2,192.0 223.5,199.6 223.7,207.3 224.0,214.9 224.3,222.6 224.5,230.2 224.8,238.0 225.2,246.4 225.5,255.1 225.9,264.0 226.3,272.9 226.7,281.7 227.0,290.1 227.4,298.1 227.7,305.5 228.0,312.0 228.2,317.6 228.4,322.0"/>
<polyline fill="none" stroke="url(#gC)" stroke-width="0.97" stroke-opacity="1.0" stroke-linejoin="round" points="241.4,71.5 241.8,75.0 242.2,79.5 242.7,84.6 243.3,90.4 243.9,96.6 244.6,103.3 245.3,110.3 246.0,117.5 246.7,124.8 247.4,132.0 248.0,139.2 248.7,146.0 249.3,152.8 249.9,159.8 250.5,166.9 251.1,174.0 251.8,181.3 252.4,188.6 253.0,196.0 253.6,203.4 254.1,210.8 254.6,218.3 255.1,225.7 255.6,233.0 256.0,240.6 256.3,248.8 256.7,257.2 257.0,265.8 257.3,274.5 257.6,282.9 257.8,291.1 258.0,298.9 258.2,306.0 258.4,312.3 258.5,317.7 258.7,322.0"/>
<polyline fill="none" stroke="url(#gB)" stroke-width="1.15" stroke-opacity="1.0" stroke-linejoin="round" points="228.9,53.8 229.1,57.6 229.3,62.3 229.5,67.8 229.8,74.0 230.1,80.7 230.4,87.9 230.7,95.4 231.1,103.1 231.4,110.9 231.8,118.6 232.1,126.3 232.4,133.7 232.7,140.9 233.1,148.4 233.4,156.0 233.7,163.7 234.0,171.4 234.4,179.3 234.7,187.2 235.0,195.1 235.4,203.1 235.7,211.0 236.0,218.9 236.3,226.8 236.6,235.0 237.0,243.7 237.3,252.7 237.6,261.9 237.9,271.2 238.3,280.2 238.6,289.0 238.9,297.3 239.1,304.9 239.4,311.6 239.6,317.4 239.7,322.0"/>
<polyline fill="none" stroke="url(#gC)" stroke-width="0.83" stroke-opacity="1.0" stroke-linejoin="round" points="192.5,54.0 192.8,57.8 193.2,62.5 193.6,68.0 194.1,74.2 194.7,80.9 195.3,88.1 195.9,95.6 196.5,103.3 197.2,111.0 197.8,118.8 198.5,126.4 199.1,133.8 199.8,141.1 200.4,148.5 201.1,156.1 201.8,163.8 202.5,171.5 203.2,179.4 203.9,187.3 204.7,195.2 205.4,203.2 206.2,211.1 207.0,219.0 207.8,226.9 208.6,235.1 209.6,243.7 210.6,252.8 211.7,262.0 212.7,271.2 213.8,280.3 214.8,289.0 215.8,297.3 216.7,304.9 217.5,311.6 218.2,317.4 218.7,322.0"/>
<polyline fill="none" stroke="url(#gB)" stroke-width="0.96" stroke-opacity="1.0" stroke-linejoin="round" points="205.0,60.7 205.4,64.4 205.8,69.0 206.4,74.4 207.0,80.4 207.7,87.0 208.5,93.9 209.2,101.2 210.0,108.7 210.8,116.3 211.7,123.9 212.5,131.3 213.3,138.5 214.1,145.6 214.9,152.9 215.7,160.2 216.6,167.7 217.4,175.3 218.3,182.9 219.2,190.6 220.1,198.4 221.1,206.1 222.0,213.9 223.0,221.6 224.0,229.3 225.0,237.2 226.2,245.7 227.4,254.5 228.7,263.5 230.0,272.5 231.3,281.3 232.6,289.8 233.7,297.9 234.8,305.3 235.8,311.9 236.6,317.5 237.3,322.0"/>
<polyline fill="none" stroke="url(#gB)" stroke-width="0.91" stroke-opacity="1.0" stroke-linejoin="round" points="216.8,64.5 217.1,68.2 217.4,72.7 217.8,78.0 218.3,83.9 218.7,90.4 219.2,97.3 219.8,104.5 220.4,111.8 220.9,119.3 221.6,126.8 222.2,134.1 222.8,141.2 223.4,148.2 224.1,155.3 224.7,162.6 225.4,170.0 226.1,177.4 226.8,185.0 227.5,192.5 228.3,200.2 229.1,207.8 229.9,215.4 230.8,223.0 231.7,230.6 232.8,238.4 233.9,246.8 235.2,255.4 236.5,264.3 237.9,273.2 239.3,281.9 240.6,290.3 241.9,298.2 243.1,305.5 244.1,312.0 245.0,317.6 245.7,322.0"/>
<polyline fill="none" stroke="url(#gC)" stroke-width="0.88" stroke-opacity="1.0" stroke-linejoin="round" points="210.8,71.1 211.1,74.6 211.4,79.0 211.8,84.2 212.2,90.0 212.7,96.2 213.1,102.9 213.7,110.0 214.2,117.2 214.7,124.4 215.2,131.7 215.6,138.8 216.1,145.7 216.5,152.6 216.9,159.5 217.3,166.6 217.8,173.8 218.2,181.1 218.6,188.4 219.1,195.8 219.4,203.2 219.8,210.7 220.1,218.1 220.4,225.5 220.7,232.9 220.9,240.5 221.1,248.6 221.2,257.1 221.3,265.7 221.4,274.4 221.4,282.9 221.4,291.1 221.5,298.8 221.5,305.9 221.5,312.3 221.5,317.7 221.5,322.0"/>
<polyline fill="none" stroke="url(#gD)" stroke-width="0.95" stroke-opacity="1.0" stroke-linejoin="round" points="242.9,66.9 242.8,70.5 242.6,75.0 242.4,80.3 242.2,86.1 241.9,92.5 241.7,99.3 241.4,106.5 241.2,113.8 240.9,121.2 240.6,128.6 240.4,135.8 240.2,142.8 240.0,149.8 239.7,156.9 239.5,164.1 239.3,171.4 239.1,178.8 238.8,186.2 238.6,193.7 238.4,201.3 238.3,208.8 238.1,216.4 238.0,223.9 237.8,231.4 237.8,239.2 237.7,247.5 237.7,256.0 237.6,264.8 237.6,273.6 237.7,282.2 237.7,290.6 237.7,298.4 237.7,305.7 237.7,312.1 237.7,317.6 237.7,322.0"/>
<polyline fill="none" stroke="url(#gE)" stroke-width="0.83" stroke-opacity="1.0" stroke-linejoin="round" points="237.7,53.0 237.6,56.8 237.5,61.5 237.3,67.1 237.2,73.3 237.0,80.0 236.8,87.2 236.6,94.7 236.5,102.4 236.3,110.2 236.1,118.0 236.0,125.7 235.8,133.1 235.7,140.4 235.5,147.9 235.4,155.5 235.3,163.2 235.1,171.0 235.0,178.9 234.9,186.8 234.8,194.7 234.7,202.7 234.7,210.7 234.6,218.6 234.6,226.5 234.6,234.7 234.7,243.4 234.8,252.5 234.9,261.7 235.0,271.0 235.1,280.1 235.3,288.9 235.4,297.2 235.5,304.8 235.6,311.6 235.7,317.4 235.8,322.0"/>
<polyline fill="none" stroke="url(#gB)" stroke-width="0.98" stroke-opacity="1.0" stroke-linejoin="round" points="217.9,64.1 218.4,67.8 218.9,72.3 219.6,77.6 220.3,83.6 221.0,90.0 221.8,96.9 222.7,104.1 223.6,111.5 224.5,119.0 225.4,126.5 226.3,133.8 227.2,140.9 228.1,147.9 229.0,155.1 230.0,162.3 230.9,169.7 231.9,177.2 232.9,184.8 233.9,192.3 234.9,200.0 235.9,207.6 237.0,215.3 238.1,222.9 239.2,230.4 240.3,238.3 241.6,246.7 243.0,255.3 244.4,264.2 245.8,273.1 247.3,281.8 248.6,290.2 250.0,298.2 251.2,305.5 252.2,312.0 253.1,317.6 253.9,322.0"/>
<polyline fill="none" stroke="url(#gB)" stroke-width="1.13" stroke-opacity="1.0" stroke-linejoin="round" points="194.9,63.5 195.3,67.1 195.9,71.7 196.5,77.0 197.2,82.9 197.9,89.4 198.7,96.3 199.6,103.5 200.5,111.0 201.4,118.5 202.3,126.0 203.2,133.3 204.2,140.4 205.1,147.4 206.0,154.6 207.0,161.9 208.0,169.3 209.0,176.8 210.1,184.4 211.1,192.0 212.3,199.7 213.4,207.3 214.6,215.0 215.8,222.6 217.1,230.2 218.5,238.1 220.1,246.5 221.8,255.2 223.5,264.1 225.3,273.0 227.1,281.7 228.8,290.2 230.5,298.1 232.0,305.5 233.4,312.0 234.6,317.6 235.5,322.0"/>
<polyline fill="none" stroke="url(#gA)" stroke-width="1.08" stroke-opacity="1.0" stroke-linejoin="round" points="206.1,55.9 206.1,59.6 206.0,64.3 206.0,69.8 205.9,75.9 205.9,82.6 205.8,89.7 205.8,97.1 205.8,104.8 205.8,112.5 205.8,120.2 205.8,127.8 205.9,135.1 206.0,142.3 206.1,149.7 206.2,157.2 206.3,164.9 206.4,172.6 206.6,180.4 206.8,188.2 207.0,196.1 207.3,204.0 207.6,211.9 208.0,219.7 208.5,227.6 209.1,235.7 209.8,244.3 210.6,253.2 211.5,262.4 212.4,271.5 213.4,280.6 214.4,289.2 215.3,297.4 216.1,305.0 216.9,311.7 217.5,317.4 218.0,322.0"/>
<polyline fill="none" stroke="url(#gC)" stroke-width="1.00" stroke-opacity="1.0" stroke-linejoin="round" points="195.6,50.0 196.1,53.9 196.6,58.7 197.2,64.2 197.9,70.5 198.7,77.3 199.5,84.6 200.4,92.2 201.3,100.0 202.2,107.9 203.0,115.8 203.9,123.5 204.7,131.0 205.5,138.4 206.4,145.9 207.2,153.6 208.1,161.4 208.9,169.3 209.8,177.3 210.7,185.3 211.5,193.4 212.4,201.4 213.2,209.5 214.1,217.5 214.9,225.5 215.7,233.8 216.5,242.6 217.4,251.7 218.3,261.1 219.2,270.5 220.0,279.7 220.9,288.5 221.6,296.9 222.3,304.6 223.0,311.5 223.5,317.3 223.9,322.0"/>
<polyline fill="none" stroke="url(#gB)" stroke-width="1.00" stroke-opacity="1.0" stroke-linejoin="round" points="253.0,62.7 253.2,66.4 253.4,71.0 253.7,76.3 254.0,82.2 254.4,88.7 254.8,95.7 255.2,102.9 255.6,110.4 255.9,117.9 256.3,125.4 256.6,132.8 256.9,139.9 257.2,146.9 257.4,154.1 257.7,161.5 258.0,168.9 258.2,176.4 258.5,184.0 258.7,191.6 258.9,199.3 259.0,207.0 259.1,214.7 259.1,222.3 259.1,229.9 259.0,237.8 258.7,246.2 258.4,255.0 258.1,263.9 257.7,272.8 257.3,281.6 256.8,290.1 256.4,298.1 256.0,305.4 255.7,312.0 255.4,317.5 255.2,322.0"/>
<polyline fill="none" stroke="url(#gD)" stroke-width="0.98" stroke-opacity="1.0" stroke-linejoin="round" points="247.3,68.3 246.9,71.9 246.5,76.4 246.0,81.6 245.4,87.4 244.8,93.8 244.2,100.5 243.5,107.6 242.8,114.9 242.2,122.3 241.6,129.6 241.0,136.8 240.5,143.8 240.0,150.7 239.5,157.7 239.1,164.9 238.6,172.2 238.1,179.5 237.7,186.9 237.3,194.4 236.9,201.9 236.6,209.4 236.4,217.0 236.3,224.5 236.3,231.9 236.4,239.6 236.6,247.8 237.0,256.4 237.4,265.1 237.9,273.9 238.4,282.5 239.0,290.7 239.6,298.6 240.1,305.8 240.5,312.2 240.9,317.6 241.2,322.0"/>
<polyline fill="none" stroke="url(#gC)" stroke-width="0.89" stroke-opacity="1.0" stroke-linejoin="round" points="231.6,59.7 232.0,63.5 232.5,68.1 233.1,73.5 233.8,79.5 234.5,86.1 235.3,93.1 236.1,100.4 236.9,107.9 237.7,115.5 238.5,123.1 239.3,130.6 240.0,137.8 240.7,144.9 241.4,152.2 242.2,159.6 242.9,167.1 243.7,174.7 244.4,182.4 245.1,190.1 245.8,197.9 246.5,205.7 247.2,213.5 247.8,221.2 248.3,228.9 248.9,236.9 249.4,245.4 249.9,254.2 250.3,263.2 250.8,272.3 251.2,281.1 251.6,289.7 251.9,297.8 252.2,305.2 252.5,311.8 252.8,317.5 253.0,322.0"/>
<polyline fill="none" stroke="url(#gB)" stroke-width="1.03" stroke-opacity="1.0" stroke-linejoin="round" points="218.1,53.5 218.7,57.4 219.5,62.1 220.3,67.6 221.3,73.8 222.4,80.5 223.5,87.7 224.7,95.2 225.9,102.9 227.1,110.7 228.2,118.5 229.3,126.1 230.3,133.5 231.3,140.8 232.3,148.2 233.3,155.8 234.4,163.5 235.4,171.3 236.4,179.1 237.3,187.1 238.3,195.0 239.1,203.0 239.9,210.9 240.7,218.9 241.3,226.7 241.8,234.9 242.3,243.6 242.6,252.6 242.9,261.9 243.2,271.1 243.4,280.2 243.6,289.0 243.7,297.2 243.8,304.8 243.9,311.6 244.0,317.4 244.1,322.0"/>
<polyline fill="none" stroke="url(#gE)" stroke-width="0.82" stroke-opacity="1.0" stroke-linejoin="round" points="205.8,47.1 206.3,51.1 206.9,55.9 207.6,61.5 208.4,67.9 209.3,74.8 210.2,82.1 211.2,89.8 212.2,97.7 213.2,105.7 214.3,113.6 215.3,121.4 216.3,129.0 217.3,136.5 218.3,144.1 219.4,151.9 220.4,159.7 221.5,167.7 222.6,175.8 223.8,183.9 224.9,192.0 226.1,200.2 227.3,208.3 228.5,216.4 229.7,224.5 231.0,232.9 232.4,241.8 234.0,251.0 235.5,260.5 237.1,269.9 238.7,279.2 240.2,288.2 241.7,296.6 243.0,304.4 244.2,311.4 245.2,317.3 246.0,322.0"/>
<polyline fill="none" stroke="url(#gC)" stroke-width="0.81" stroke-opacity="1.0" stroke-linejoin="round" points="194.7,59.8 195.4,63.6 196.2,68.2 197.2,73.6 198.3,79.6 199.4,86.2 200.7,93.2 202.0,100.5 203.3,108.0 204.6,115.6 205.9,123.2 207.2,130.7 208.4,137.9 209.6,145.0 210.8,152.3 212.1,159.7 213.4,167.2 214.6,174.8 215.9,182.5 217.2,190.2 218.4,198.0 219.6,205.7 220.8,213.5 222.0,221.2 223.1,228.9 224.2,236.9 225.3,245.4 226.5,254.2 227.6,263.3 228.7,272.3 229.8,281.2 230.8,289.7 231.7,297.8 232.6,305.2 233.4,311.9 234.1,317.5 234.6,322.0"/>
<polyline fill="none" stroke="url(#gC)" stroke-width="1.05" stroke-opacity="1.0" stroke-linejoin="round" points="209.2,55.5 209.3,59.3 209.3,64.0 209.4,69.4 209.4,75.6 209.5,82.2 209.6,89.4 209.7,96.8 209.8,104.5 209.9,112.2 210.1,119.9 210.3,127.5 210.5,134.8 210.7,142.1 210.9,149.5 211.1,157.0 211.4,164.6 211.6,172.4 211.9,180.2 212.2,188.0 212.5,195.9 212.9,203.8 213.4,211.7 213.9,219.6 214.4,227.4 215.1,235.5 215.9,244.2 216.8,253.1 217.7,262.3 218.7,271.5 219.8,280.5 220.8,289.2 221.7,297.4 222.6,305.0 223.4,311.7 224.1,317.4 224.6,322.0"/>
<polyline fill="none" stroke="url(#gC)" stroke-width="0.81" stroke-opacity="1.0" stroke-linejoin="round" points="195.0,55.3 195.6,59.1 196.2,63.8 197.1,69.2 198.0,75.4 199.0,82.1 200.0,89.2 201.1,96.6 202.2,104.3 203.3,112.0 204.5,119.8 205.5,127.4 206.6,134.7 207.6,141.9 208.6,149.3 209.7,156.9 210.8,164.5 211.8,172.3 212.9,180.1 214.0,187.9 215.0,195.8 216.1,203.7 217.1,211.6 218.1,219.5 219.0,227.3 220.0,235.5 220.9,244.1 221.9,253.1 222.8,262.3 223.8,271.4 224.7,280.5 225.6,289.2 226.4,297.4 227.1,304.9 227.8,311.7 228.3,317.4 228.8,322.0"/>
<polyline fill="none" stroke="url(#gB)" stroke-width="1.12" stroke-opacity="1.0" stroke-linejoin="round" points="219.3,59.3 219.7,63.0 220.3,67.7 221.0,73.1 221.7,79.1 222.6,85.7 223.4,92.7 224.4,100.0 225.3,107.6 226.3,115.2 227.2,122.8 228.2,130.3 229.1,137.5 230.0,144.7 230.9,151.9 231.9,159.4 232.9,166.9 233.9,174.5 234.9,182.2 235.9,189.9 236.9,197.7 237.9,205.5 239.0,213.3 240.0,221.0 241.0,228.8 242.1,236.8 243.3,245.3 244.6,254.1 245.8,263.1 247.1,272.2 248.4,281.1 249.6,289.7 250.7,297.8 251.8,305.2 252.8,311.8 253.6,317.5 254.2,322.0"/>
<polyline fill="none" stroke="url(#gE)" stroke-width="0.94" stroke-opacity="1.0" stroke-linejoin="round" points="249.5,72.9 249.9,76.4 250.3,80.8 250.8,85.9 251.3,91.7 251.9,97.9 252.6,104.5 253.2,111.5 253.8,118.6 254.5,125.9 255.1,133.1 255.6,140.2 256.1,147.0 256.6,153.8 257.0,160.7 257.5,167.7 258.0,174.9 258.5,182.1 258.9,189.4 259.3,196.7 259.6,204.1 259.9,211.5 260.2,218.8 260.3,226.2 260.3,233.5 260.3,241.1 260.1,249.2 259.8,257.6 259.4,266.1 259.0,274.7 258.5,283.2 258.0,291.3 257.5,299.0 257.1,306.1 256.7,312.3 256.3,317.7 256.1,322.0"/>
<polyline fill="none" stroke="url(#gE)" stroke-width="0.86" stroke-opacity="1.0" stroke-linejoin="round" points="261.7,74.0 261.6,77.5 261.4,81.9 261.2,87.0 261.0,92.7 260.7,98.9 260.5,105.5 260.3,112.4 260.0,119.5 259.8,126.7 259.7,133.9 259.6,141.0 259.5,147.8 259.5,154.5 259.4,161.4 259.4,168.4 259.3,175.5 259.3,182.7 259.4,189.9 259.4,197.2 259.6,204.6 259.8,211.9 260.1,219.3 260.5,226.6 261.0,233.9 261.6,241.4 262.5,249.5 263.4,257.8 264.5,266.4 265.7,274.9 266.9,283.3 268.1,291.4 269.2,299.1 270.3,306.1 271.2,312.4 272.0,317.7 272.6,322.0"/>
<polyline fill="none" stroke="url(#gC)" stroke-width="1.13" stroke-opacity="1.0" stroke-linejoin="round" points="211.6,44.8 212.0,48.7 212.6,53.6 213.2,59.3 213.9,65.7 214.6,72.7 215.4,80.1 216.2,87.8 217.1,95.8 217.9,103.8 218.7,111.8 219.5,119.7 220.2,127.4 220.9,134.9 221.6,142.6 222.3,150.4 223.1,158.4 223.8,166.4 224.5,174.5 225.2,182.7 225.9,190.9 226.5,199.1 227.1,207.4 227.6,215.5 228.1,223.7 228.5,232.1 228.9,241.1 229.2,250.4 229.5,259.9 229.8,269.5 230.0,278.9 230.2,287.9 230.3,296.4 230.5,304.3 230.6,311.3 230.7,317.2 230.9,322.0"/>
<polyline fill="none" stroke="url(#gA)" stroke-width="0.90" stroke-opacity="1.0" stroke-linejoin="round" points="231.7,72.2 232.0,75.8 232.4,80.2 232.9,85.3 233.4,91.0 234.0,97.3 234.6,104.0 235.3,110.9 235.9,118.1 236.5,125.4 237.0,132.6 237.6,139.7 238.0,146.5 238.4,153.3 238.8,160.3 239.3,167.3 239.7,174.5 240.1,181.7 240.4,189.0 240.8,196.4 241.0,203.8 241.2,211.2 241.3,218.6 241.3,225.9 241.2,233.3 241.0,240.9 240.6,249.0 240.0,257.4 239.4,266.0 238.6,274.6 237.9,283.1 237.1,291.2 236.3,298.9 235.6,306.0 235.0,312.3 234.5,317.7 234.1,322.0"/>
<polyline fill="none" stroke="#30a848" stroke-width="0.90" stroke-opacity="1.0" stroke-linejoin="round" points="209.0,197.9 211.4,195.0 214.7,190.9 218.5,186.2 222.7,181.1 226.8,176.2 230.7,171.9 234.5,167.9 238.7,163.9 242.9,160.0 246.7,156.5 250.0,153.6 252.3,151.4"/>
<polyline fill="none" stroke="#58c060" stroke-width="0.90" stroke-opacity="1.0" stroke-linejoin="round" points="207.8,141.9 209.8,139.5 212.5,136.1 215.8,132.0 219.3,127.8 222.8,123.6 226.1,120.0 229.3,116.6 232.9,113.1 236.4,109.8 239.6,106.7 242.4,104.2 244.4,102.3"/>
<polyline fill="none" stroke="#40b050" stroke-width="0.90" stroke-opacity="1.0" stroke-linejoin="round" points="212.6,219.4 214.9,216.6 218.1,212.6 221.9,207.9 226.0,202.9 230.1,198.1 233.9,193.9 237.7,190.0 241.8,186.1 245.9,182.4 249.7,179.0 252.9,176.2 255.2,174.1"/>
<polyline fill="none" stroke="#58c060" stroke-width="0.90" stroke-opacity="1.0" stroke-linejoin="round" points="224.5,195.3 226.7,192.7 229.7,189.1 233.3,184.9 237.1,180.3 240.9,175.7 244.5,171.4 248.0,167.1 251.9,162.4 255.7,157.8 259.2,153.5 262.2,149.8 264.4,147.2"/>
<polyline fill="none" stroke="#28a040" stroke-width="0.90" stroke-opacity="1.0" stroke-linejoin="round" points="222.0,173.8 223.6,171.9 225.8,169.2 228.5,166.0 231.4,162.5 234.3,159.1 236.9,155.8 239.6,152.6 242.5,149.0 245.4,145.4 248.0,142.1 250.3,139.3 251.9,137.3"/>
<polyline fill="none" stroke="#30a848" stroke-width="0.90" stroke-opacity="1.0" stroke-linejoin="round" points="213.8,169.1 215.7,166.8 218.5,163.6 221.7,159.7 225.1,155.6 228.6,151.5 231.8,147.6 235.0,143.7 238.4,139.4 241.9,135.1 245.1,131.1 247.8,127.8 249.7,125.4"/>
<polyline fill="none" stroke="#58c060" stroke-width="0.90" stroke-opacity="1.0" stroke-linejoin="round" points="203.3,165.9 205.2,163.6 207.7,160.5 210.8,156.8 214.1,152.9 217.3,149.0 220.4,145.4 223.4,142.0 226.7,138.3 229.9,134.8 233.0,131.4 235.5,128.7 237.4,126.6"/>
<polyline fill="none" stroke="#58c060" stroke-width="0.90" stroke-opacity="1.0" stroke-linejoin="round" points="197.2,206.6 198.9,204.5 201.2,201.6 204.0,198.1 207.0,194.5 210.0,190.9 212.8,187.8 215.6,184.9 218.6,182.0 221.6,179.2 224.4,176.6 226.8,174.5 228.5,172.9"/>
<polyline fill="none" stroke="#30a848" stroke-width="0.90" stroke-opacity="1.0" stroke-linejoin="round" points="213.0,201.3 215.2,198.6 218.2,194.9 221.7,190.6 225.5,185.9 229.4,181.4 232.9,177.4 236.4,173.6 240.3,169.7 244.1,165.9 247.6,162.4 250.6,159.5 252.8,157.4"/>
<polyline fill="none" stroke="#58c060" stroke-width="0.90" stroke-opacity="1.0" stroke-linejoin="round" points="206.9,162.4 208.5,160.5 210.6,157.9 213.1,154.9 215.8,151.6 218.5,148.4 221.0,145.6 223.5,142.9 226.2,140.1 228.9,137.4 231.4,135.0 233.5,132.9 235.0,131.4"/>
<polyline fill="none" stroke="#28a040" stroke-width="0.90" stroke-opacity="1.0" stroke-linejoin="round" points="212.7,219.8 214.4,217.8 216.8,215.0 219.5,211.6 222.5,208.1 225.5,204.5 228.3,201.1 231.1,197.7 234.1,194.0 237.1,190.3 239.8,186.8 242.2,183.9 243.9,181.8"/>
<polyline fill="none" stroke="#58c060" stroke-width="0.90" stroke-opacity="1.0" stroke-linejoin="round" points="215.5,127.6 217.8,124.8 221.0,121.0 224.8,116.4 228.9,111.5 233.0,106.6 236.8,102.0 240.6,97.3 244.7,92.3 248.8,87.2 252.6,82.4 255.9,78.5 258.2,75.6"/>
<polyline fill="none" stroke="#40b050" stroke-width="0.90" stroke-opacity="1.0" stroke-linejoin="round" points="209.4,162.0 211.5,159.5 214.3,156.0 217.7,151.8 221.4,147.4 225.0,143.1 228.4,139.2 231.8,135.4 235.5,131.5 239.1,127.7 242.5,124.1 245.4,121.2 247.4,119.0"/>
<polyline fill="none" stroke="#28a040" stroke-width="0.90" stroke-opacity="1.0" stroke-linejoin="round" points="221.1,196.4 222.9,194.2 225.5,191.1 228.5,187.5 231.8,183.6 235.1,179.6 238.1,176.0 241.1,172.3 244.4,168.3 247.7,164.4 250.7,160.7 253.2,157.5 255.1,155.3"/>
<polyline fill="none" stroke="#40b050" stroke-width="0.90" stroke-opacity="1.0" stroke-linejoin="round" points="219.0,213.2 220.7,211.1 223.0,208.2 225.8,204.7 228.8,201.1 231.8,197.5 234.6,194.5 237.4,191.7 240.4,188.8 243.4,186.1 246.1,183.7 248.5,181.6 250.2,180.1"/>
<polyline fill="none" stroke="#58c060" stroke-width="0.90" stroke-opacity="1.0" stroke-linejoin="round" points="217.6,148.6 219.3,146.6 221.5,143.8 224.2,140.5 227.1,137.0 230.0,133.6 232.7,130.6 235.4,127.8 238.2,124.9 241.1,122.2 243.8,119.7 246.1,117.6 247.7,116.1"/>
<polyline fill="none" stroke="#30a848" stroke-width="0.90" stroke-opacity="1.0" stroke-linejoin="round" points="199.0,183.6 201.1,181.1 204.0,177.6 207.4,173.4 211.1,169.0 214.8,164.6 218.2,160.6 221.6,156.8 225.3,152.7 229.0,148.7 232.4,145.0 235.3,141.9 237.4,139.6"/>
<polyline fill="none" stroke="#58c060" stroke-width="0.90" stroke-opacity="1.0" stroke-linejoin="round" points="210.4,192.7 212.1,190.6 214.5,187.7 217.3,184.3 220.3,180.6 223.4,177.0 226.2,173.8 229.0,170.8 232.0,167.8 235.0,164.8 237.8,162.0 240.2,159.7 241.9,158.0"/>
<polyline fill="none" stroke="#58c060" stroke-width="0.90" stroke-opacity="1.0" stroke-linejoin="round" points="222.7,174.6 224.3,172.8 226.4,170.1 228.9,167.0 231.6,163.7 234.3,160.5 236.8,157.8 239.3,155.2 242.0,152.7 244.7,150.3 247.2,148.2 249.3,146.4 250.9,145.0"/>
<polyline fill="none" stroke="#40b050" stroke-width="0.90" stroke-opacity="1.0" stroke-linejoin="round" points="197.7,191.2 199.6,188.9 202.2,185.8 205.2,182.1 208.6,178.2 211.9,174.2 215.0,170.4 218.1,166.5 221.4,162.3 224.7,158.1 227.8,154.1 230.4,150.7 232.3,148.3"/>
<polyline fill="none" stroke="#58c060" stroke-width="0.90" stroke-opacity="1.0" stroke-linejoin="round" points="224.9,147.1 227.0,144.5 230.0,140.9 233.5,136.7 237.3,132.1 241.0,127.6 244.5,123.5 248.0,119.5 251.8,115.3 255.6,111.2 259.1,107.4 262.0,104.2 264.2,101.8"/>
<polyline fill="none" stroke="#28a040" stroke-width="0.90" stroke-opacity="1.0" stroke-linejoin="round" points="208.5,127.0 210.9,124.2 214.1,120.3 218.0,115.7 222.1,110.7 226.3,105.8 230.2,101.1 234.0,96.4 238.2,91.3 242.3,86.2 246.2,81.4 249.4,77.4 251.8,74.5"/>
<polyline fill="none" stroke="#30a848" stroke-width="0.90" stroke-opacity="1.0" stroke-linejoin="round" points="217.9,185.4 219.8,183.1 222.5,179.8 225.6,176.0 229.0,171.9 232.4,167.9 235.5,164.2 238.7,160.7 242.1,156.9 245.5,153.2 248.6,149.8 251.3,147.0 253.2,144.9"/>
<polyline fill="none" stroke="#30a848" stroke-width="0.90" stroke-opacity="1.0" stroke-linejoin="round" points="208.7,147.1 211.0,144.3 214.1,140.4 217.8,135.8 221.8,131.0 225.8,126.3 229.6,122.1 233.3,118.3 237.3,114.4 241.3,110.7 245.0,107.3 248.1,104.5 250.4,102.4"/>
<polyline fill="none" stroke="#2a8a90" stroke-width="0.87" stroke-opacity="1.0" stroke-linejoin="round" points="272.0,90.0 272.6,93.7 273.5,98.7 274.5,104.7 275.6,111.4 276.8,118.4 278.0,125.6 279.2,132.7 280.3,139.3 281.2,145.1 282.0,150.0 282.7,153.9 283.3,157.3 283.9,160.2 284.5,162.8 284.9,165.0 285.3,167.0 285.5,169.0 285.5,170.9 285.4,172.9 285.0,175.0 284.3,177.2 283.4,179.4 282.2,181.5 280.8,183.6 279.3,185.6 277.8,187.6 276.2,189.5 274.7,191.4 273.3,193.2 272.0,195.0 270.9,196.7 269.8,198.2 268.7,199.6 267.6,200.9 266.6,202.2 265.6,203.5 264.7,204.9 263.8,206.4 262.9,208.1 262.0,210.0 261.1,212.0 260.2,214.0 259.4,216.1 258.5,218.3 257.7,220.6 256.9,223.1 256.3,225.7 255.7,228.6 255.3,231.6 255.0,235.0 254.9,238.7 254.9,242.8 255.1,247.1 255.4,251.7 255.8,256.4 256.2,261.3 256.7,266.1 257.2,270.9 257.6,275.5 258.0,280.0 258.4,284.5 258.8,289.3 259.3,294.1 259.7,299.0 260.2,303.8 260.6,308.4 261.1,312.6 261.4,316.3 261.8,319.5 262.0,322.0"/>
<polyline fill="none" stroke="#1a6a90" stroke-width="0.83" stroke-opacity="1.0" stroke-linejoin="round" points="266.0,95.0 266.6,97.1 267.5,99.8 268.5,102.9 269.7,106.5 270.9,110.3 272.1,114.3 273.2,118.4 274.1,122.4 274.7,126.3 275.0,130.0 274.9,133.5 274.4,136.9 273.5,140.3 272.5,143.8 271.4,147.2 270.3,150.6 269.4,154.1 268.6,157.7 268.1,161.3 268.0,165.0 268.3,168.8 268.9,172.6 269.8,176.5 270.9,180.4 272.1,184.4 273.3,188.4 274.6,192.5 275.9,196.6 277.0,200.8 278.0,205.0 279.0,209.3 280.0,213.8 281.1,218.3 282.1,222.9 283.1,227.5 284.0,232.1 284.8,236.7 285.5,241.2 285.9,245.7 286.0,250.0 285.8,254.2 285.4,258.4 284.7,262.6 283.9,266.7 282.9,270.8 281.8,274.8 280.8,278.7 279.7,282.6 278.8,286.3 278.0,290.0 277.3,293.7 276.6,297.4 275.9,301.2 275.2,304.9 274.5,308.5 273.9,311.9 273.3,315.0 272.8,317.8 272.3,320.1 272.0,322.0"/>
<polyline fill="none" stroke="#3a9aa0" stroke-width="0.87" stroke-opacity="1.0" stroke-linejoin="round" points="258.0,110.0 258.7,112.3 259.6,115.3 260.7,118.7 261.9,122.6 263.2,126.9 264.6,131.4 265.9,136.0 267.3,140.7 268.7,145.4 270.0,150.0 271.4,154.6 272.9,159.4 274.6,164.3 276.3,169.3 277.9,174.4 279.5,179.5 280.8,184.7 281.9,189.8 282.7,195.0 283.0,200.0 282.9,205.0 282.3,210.2 281.4,215.3 280.3,220.5 278.9,225.6 277.5,230.7 276.0,235.7 274.5,240.6 273.2,245.4 272.0,250.0 270.9,254.4 269.7,258.8 268.4,263.0 267.2,267.1 265.9,271.1 264.8,275.1 263.8,278.9 263.0,282.7 262.3,286.4 262.0,290.0 262.0,293.7 262.3,297.4 262.8,301.2 263.5,304.9 264.4,308.5 265.3,311.9 266.1,315.0 266.9,317.8 267.6,320.1 268.0,322.0"/>
<polyline fill="none" stroke="#3a9aa0" stroke-width="0.86" stroke-opacity="1.0" stroke-linejoin="round" points="250.0,140.0 250.7,143.0 251.5,146.8 252.4,151.3 253.5,156.4 254.7,161.9 256.0,167.6 257.4,173.4 258.8,179.2 260.4,184.8 262.0,190.0 263.8,195.0 265.9,200.2 268.2,205.3 270.6,210.5 273.1,215.6 275.5,220.7 277.7,225.7 279.8,230.6 281.6,235.4 283.0,240.0 284.1,244.4 284.9,248.6 285.5,252.7 285.9,256.6 286.2,260.5 286.3,264.3 286.3,268.2 286.3,272.0 286.1,276.0 286.0,280.0 285.7,284.3 285.3,288.9 284.7,293.8 284.0,298.7 283.2,303.5 282.4,308.1 281.6,312.4 281.0,316.3 280.4,319.5 280.0,322.0"/>
<polyline fill="none" stroke="#2a8a90" stroke-width="0.89" stroke-opacity="1.0" stroke-linejoin="round" points="245.0,200.0 246.0,201.8 247.3,204.0 248.8,206.6 250.5,209.6 252.4,212.8 254.3,216.2 256.3,219.7 258.3,223.2 260.2,226.7 262.0,230.0 263.8,233.2 265.7,236.3 267.7,239.4 269.8,242.6 271.8,245.8 273.7,249.2 275.5,252.7 277.2,256.5 278.7,260.6 280.0,265.0 281.0,270.1 281.9,275.9 282.6,282.3 283.2,289.0 283.6,295.7 284.0,302.2 284.3,308.4 284.5,313.9 284.8,318.5 285.0,322.0"/>
<polyline fill="none" stroke="#1a6a90" stroke-width="0.83" stroke-opacity="1.0" stroke-linejoin="round" points="275.0,100.0 274.2,102.4 273.1,105.4 271.8,109.1 270.3,113.1 268.8,117.5 267.3,122.1 266.0,126.7 264.9,131.4 264.2,135.8 264.0,140.0 264.4,144.0 265.2,148.1 266.5,152.2 268.1,156.2 269.8,160.3 271.5,164.4 273.1,168.4 274.5,172.3 275.5,176.2 276.0,180.0 275.9,183.7 275.4,187.2 274.5,190.6 273.4,193.9 272.1,197.2 270.9,200.5 269.7,203.9 268.8,207.4 268.2,211.1 268.0,215.0 268.4,219.0 269.1,223.1 270.2,227.2 271.6,231.5 273.0,235.8 274.4,240.3 275.8,244.9 276.9,249.8 277.6,254.8 278.0,260.0 277.9,265.8 277.4,272.3 276.7,279.3 275.7,286.6 274.6,293.8 273.5,300.8 272.4,307.4 271.4,313.3 270.6,318.2 270.0,322.0"/>
<polyline fill="none" stroke="#1a6a90" stroke-width="0.97" stroke-opacity="1.0" stroke-linejoin="round" points="262.0,85.0 262.5,87.1 263.1,89.7 263.7,92.8 264.5,96.2 265.4,100.0 266.3,104.0 267.2,108.0 268.1,112.1 269.1,116.1 270.0,120.0 270.9,123.7 271.9,127.4 272.9,131.2 273.9,134.9 274.9,138.8 276.0,142.7 277.0,146.7 278.0,151.0 279.0,155.4 280.0,160.0 281.0,164.9 282.1,170.2 283.2,175.6 284.4,181.3 285.5,187.1 286.5,192.9 287.4,198.6 288.2,204.3 288.7,209.8 289.0,215.0 289.0,220.0 288.8,224.7 288.3,229.3 287.7,233.8 287.0,238.2 286.2,242.6 285.3,247.2 284.5,251.9 283.7,256.8 283.0,262.0 282.3,267.7 281.6,274.1 280.8,280.9 279.9,287.9 279.1,294.9 278.3,301.7 277.6,308.0 277.0,313.6 276.4,318.4 276.0,322.0"/>
<polyline fill="none" stroke="#1a6a90" stroke-width="0.91" stroke-opacity="1.0" stroke-linejoin="round" points="240.0,120.0 240.9,123.0 242.1,126.9 243.5,131.5 245.0,136.6 246.7,142.2 248.4,148.0 250.2,153.8 251.9,159.5 253.5,165.0 255.0,170.0 256.3,174.7 257.6,179.4 258.8,184.0 260.0,188.6 261.2,193.1 262.4,197.6 263.6,202.0 265.0,206.4 266.4,210.7 268.0,215.0 269.8,219.2 271.9,223.2 274.1,227.2 276.4,231.1 278.8,235.0 281.0,238.9 283.2,242.8 285.1,246.8 286.7,250.8 288.0,255.0 288.9,259.4 289.5,264.0 289.9,268.9 290.1,273.7 290.1,278.6 289.9,283.4 289.7,288.0 289.5,292.4 289.2,296.4 289.0,300.0 288.7,303.2 288.3,306.2 287.8,309.0 287.2,311.5 286.6,313.8 285.9,315.9 285.3,317.7 284.8,319.4 284.3,320.8 284.0,322.0"/>
<polyline fill="none" stroke="#1a6a90" stroke-width="0.91" stroke-opacity="1.0" stroke-linejoin="round" points="282.0,150.0 282.3,151.5 282.8,153.4 283.4,155.7 284.1,158.2 284.8,160.9 285.4,163.8 285.8,166.7 286.2,169.6 286.2,172.4 286.0,175.0 285.4,177.5 284.6,180.2 283.6,182.8 282.4,185.5 281.0,188.1 279.6,190.7 278.1,193.2 276.7,195.6 275.3,197.9 274.0,200.0 272.8,201.8 271.6,203.3 270.4,204.6 269.2,205.8 268.0,206.9 266.8,208.0 265.6,209.3 264.4,210.9 263.2,212.7 262.0,215.0 260.8,217.5 259.5,220.1 258.1,222.9 256.8,225.8 255.5,228.9 254.2,232.4 253.0,236.2 251.9,240.3 250.9,244.9 250.0,250.0 249.3,256.0 248.6,263.2 248.1,271.1 247.6,279.6 247.2,288.2 246.9,296.6 246.7,304.5 246.4,311.6 246.2,317.5 246.0,322.0"/>
<polyline fill="none" stroke="#2a8a90" stroke-width="0.93" stroke-opacity="1.0" stroke-linejoin="round" points="268.0,160.0 267.3,162.4 266.4,165.4 265.2,168.9 263.9,172.9 262.5,177.2 261.2,181.7 260.0,186.4 259.0,191.0 258.3,195.6 258.0,200.0 258.0,204.3 258.3,208.8 258.8,213.3 259.5,217.9 260.4,222.5 261.4,227.1 262.4,231.7 263.6,236.2 264.8,240.7 266.0,245.0 267.3,249.2 268.8,253.4 270.5,257.5 272.2,261.5 274.0,265.5 275.8,269.5 277.5,273.4 279.2,277.3 280.7,281.1 282.0,285.0 283.2,289.0 284.2,293.2 285.2,297.5 286.2,301.8 287.0,306.0 287.8,310.0 288.4,313.7 289.0,317.0 289.6,319.8 290.0,322.0"/>
<polyline fill="none" stroke="#1a4a90" stroke-width="1.30" stroke-opacity="1.0" stroke-linejoin="round" points="255.0,245.0 270.0,280.0 284.0,318.0"/>
<polyline fill="none" stroke="#1a50a0" stroke-width="1.20" stroke-opacity="1.0" stroke-linejoin="round" points="282.0,84.0 283.0,80.0 285.0,86.0 285.5,160.0 285.5,240.0 284.0,318.0"/>
<polyline fill="none" stroke="#2020c8" stroke-width="1.10" stroke-opacity="1.0" stroke-linejoin="round" points="191.0,45.0 194.0,41.0 198.0,43.0 201.0,38.0 205.0,37.0 208.0,41.0 212.0,39.0 216.0,42.0 219.0,40.0 223.0,44.0 227.0,45.0 231.0,47.0 235.0,48.0 239.0,52.0 243.0,54.0 247.0,58.0 251.0,60.0 256.0,62.0 261.0,63.0 265.0,68.0 269.0,72.0"/>
<polyline fill="none" stroke="#1818c8" stroke-width="1.03" stroke-opacity="1.0" stroke-linejoin="round" points="215.2,52.1 206.8,52.4 199.4,55.5 191.6,52.4 195.8,48.0 194.0,47.0 203.5,45.1 211.1,45.0 220.2,49.5 216.9,50.1"/>
<polyline fill="none" stroke="#2020d0" stroke-width="0.81" stroke-opacity="1.0" stroke-linejoin="round" points="208.8,65.6 204.1,62.6 201.7,55.0 204.0,50.6 211.8,50.0 213.8,47.8 217.9,52.3 221.7,54.7 220.6,62.9 217.5,65.8 213.6,66.1 208.3,64.2"/>
<polyline fill="none" stroke="#2020d0" stroke-width="0.89" stroke-opacity="1.0" stroke-linejoin="round" points="225.8,62.2 225.0,60.5 229.8,54.5 236.6,52.7 241.0,58.0 248.6,58.9 245.6,65.8 242.2,69.8 232.8,67.7 229.3,66.2"/>
<polyline fill="none" stroke="#2020d0" stroke-width="1.00" stroke-opacity="1.0" stroke-linejoin="round" points="248.4,66.3 235.7,68.6 229.3,63.1 233.1,59.4 238.9,60.0 248.1,61.2 252.5,62.5 262.1,65.0 257.7,66.1 246.9,67.3"/>
<polyline fill="none" stroke="#1010b0" stroke-width="0.86" stroke-opacity="1.0" stroke-linejoin="round" points="234.6,64.6 229.2,63.5 226.4,64.5 220.7,64.9 217.8,65.9 217.0,61.9 216.7,62.8 218.2,57.3 219.9,56.8 228.7,59.3 231.3,60.7 235.6,59.7 232.8,63.5"/>
<polyline fill="none" stroke="#2020d0" stroke-width="0.89" stroke-opacity="1.0" stroke-linejoin="round" points="223.0,50.5 217.0,49.6 206.7,52.2 201.3,51.4 191.8,50.1 192.2,48.8 191.9,43.9 201.1,43.3 207.8,44.4 216.1,45.9 220.4,48.9 219.3,48.5"/>
<polyline fill="none" stroke="#1010b0" stroke-width="1.10" stroke-opacity="1.0" stroke-linejoin="round" points="208.2,69.5 205.8,66.3 214.5,65.7 222.3,60.5 230.6,62.6 239.5,62.2 242.3,64.0 243.4,69.3 234.8,69.3 227.2,72.0 220.3,69.1 214.0,72.5 206.9,68.5"/>
<polyline fill="none" stroke="#1010b0" stroke-width="0.86" stroke-opacity="1.0" stroke-linejoin="round" points="250.8,68.9 242.4,70.9 240.0,66.1 240.4,62.7 242.9,61.6 246.2,60.0 252.2,61.1 255.3,61.9 257.7,62.9 259.8,65.1 263.7,68.6 261.2,68.4 255.7,71.6 249.6,71.5"/>
<polyline fill="none" stroke="#1010b0" stroke-width="1.08" stroke-opacity="1.0" stroke-linejoin="round" points="216.4,63.5 207.6,62.8 199.6,61.3 194.2,63.5 192.7,61.6 191.3,55.5 197.1,54.1 198.5,55.7 208.6,55.5 216.8,55.3 223.0,58.5 226.8,57.6 225.3,58.7 219.5,63.3 217.1,63.2"/>
<polyline fill="none" stroke="#2020d0" stroke-width="0.85" stroke-opacity="1.0" stroke-linejoin="round" points="247.9,68.7 243.2,72.6 236.1,70.8 232.3,71.0 224.5,67.6 228.0,62.5 232.5,58.6 238.8,60.2 246.0,58.7 251.4,66.4 248.5,71.1"/>
<polyline fill="none" stroke="#1010b0" stroke-width="0.84" stroke-opacity="1.0" stroke-linejoin="round" points="231.4,68.5 223.1,68.3 217.2,68.6 209.4,68.0 211.8,66.1 213.2,64.7 219.6,63.8 230.3,61.4 232.6,65.4 232.1,68.5 231.3,66.8"/>
<polyline fill="none" stroke="#2a30c0" stroke-width="0.81" stroke-opacity="1.0" stroke-linejoin="round" points="222.7,43.8 230.2,47.5 230.9,47.5 231.5,47.8 232.2,47.9 233.7,48.6 240.5,53.4 232.6,57.0 224.4,53.6 215.9,54.1 216.0,47.0 214.9,46.6 229.1,47.3"/>
<polyline fill="none" stroke="#1010b0" stroke-width="1.05" stroke-opacity="1.0" stroke-linejoin="round" points="243.9,69.5 246.7,69.6 241.4,71.4 241.3,72.2 237.1,72.9 231.7,73.8 231.3,73.4 231.0,68.6 234.5,67.7 233.6,66.6 238.4,67.3 244.4,66.0 243.7,66.6"/>
<polyline fill="none" stroke="#1818c8" stroke-width="0.97" stroke-opacity="1.0" stroke-linejoin="round" points="191.5,58.4 195.8,55.0 195.9,56.0 200.9,59.1 207.0,60.0 207.3,60.8 204.1,64.4 200.0,66.4 196.4,68.3 193.6,64.1 194.9,62.8 193.2,61.5 193.3,60.4"/>
<polyline fill="none" stroke="#1818c8" stroke-width="0.85" stroke-opacity="1.0" stroke-linejoin="round" points="214.2,71.1 214.8,69.8 211.1,67.5 205.8,63.9 206.1,56.2 207.5,54.3 213.6,50.6 216.8,52.8 219.3,58.7 218.3,63.5 220.5,65.0 216.6,68.0"/>
<polyline fill="none" stroke="#1010b0" stroke-width="0.86" stroke-opacity="1.0" stroke-linejoin="round" points="238.7,64.0 240.7,65.2 230.0,72.4 221.3,72.8 216.7,67.1 214.5,63.1 215.0,55.1 223.3,50.1 230.0,53.1 237.5,56.8 240.1,60.9"/>
<polyline fill="none" stroke="#1010b0" stroke-width="0.97" stroke-opacity="1.0" stroke-linejoin="round" points="232.7,70.7 228.4,67.8 229.7,71.9 224.8,73.0 222.3,73.6 227.4,68.2 219.1,67.7 219.5,66.8 226.6,62.7 235.9,61.9 239.9,58.7"/>
<polyline fill="none" stroke="#1010b0" stroke-width="0.97" stroke-opacity="1.0" stroke-linejoin="round" points="227.6,73.1 226.7,70.3 235.5,67.7 226.9,64.7 226.8,66.7 219.1,64.7 223.9,62.9 218.2,65.4 217.5,67.8 217.7,71.5 218.0,72.8 216.2,67.7 224.0,71.4"/>
<polyline fill="none" stroke="#2020d0" stroke-width="0.94" stroke-opacity="1.0" stroke-linejoin="round" points="198.0,53.2 200.6,49.9 192.7,47.8 191.1,47.2 197.2,51.2 201.2,53.9 192.8,50.7 196.6,49.9 206.1,52.1 200.1,48.5 199.5,49.3 205.4,51.5 204.1,45.9"/>
<polyline fill="none" stroke="#1818c8" stroke-width="0.83" stroke-opacity="1.0" stroke-linejoin="round" points="249.8,69.7 251.5,71.4 249.1,74.8 255.0,70.0 249.4,68.2 247.9,70.8 243.9,71.6 243.4,69.2 246.6,68.4"/>
<polyline fill="none" stroke="#1010b0" stroke-width="0.92" stroke-opacity="1.0" stroke-linejoin="round" points="239.9,68.1 238.2,69.7 246.5,70.9 238.2,67.6 234.2,66.7 227.0,71.4 231.2,67.1 228.1,62.6 226.6,58.3 218.7,54.0 213.2,53.5"/>
<polyline fill="none" stroke="#1010b0" stroke-width="0.88" stroke-opacity="1.0" stroke-linejoin="round" points="225.0,59.7 216.7,63.3 209.2,58.3 215.2,60.0 223.2,63.5 218.3,60.3 218.8,65.5 213.2,62.9 220.3,59.0 228.0,54.9"/>
<polyline fill="none" stroke="#1818c8" stroke-width="0.87" stroke-opacity="1.0" stroke-linejoin="round" points="237.7,58.9 231.7,60.4 239.0,64.6 231.7,68.2 231.2,70.8 224.6,71.6 227.4,68.8 222.1,70.6 214.9,67.3 218.1,68.8 227.0,73.7 232.4,74.3 239.4,71.9 248.4,75.5"/>
<polyline fill="none" stroke="#2020d0" stroke-width="0.82" stroke-opacity="1.0" stroke-linejoin="round" points="237.8,73.1 231.3,67.4 238.1,64.4 239.0,64.0 248.5,63.3 242.1,59.7 250.2,63.5 243.9,69.1 242.0,71.8 242.3,66.2 243.9,70.4 242.7,74.3"/>
<polyline fill="none" stroke="#1a28a8" stroke-width="1.40" stroke-opacity="1.0" stroke-linejoin="round" points="193.0,46.0 194.0,58.0 196.0,70.0 199.0,80.0"/>
<polyline fill="none" stroke="#1a5a70" stroke-width="1.20" stroke-opacity="1.0" stroke-linejoin="round" points="178.0,20.0 191.0,40.0 198.0,58.0 204.0,80.0 208.0,98.0"/>
<polyline fill="none" stroke="#2040b8" stroke-width="0.85" stroke-opacity="1.0" stroke-linejoin="round" points="210.7,68.4 214.3,103.0"/>
<polyline fill="none" stroke="#1a30b0" stroke-width="0.80" stroke-opacity="1.0" stroke-linejoin="round" points="224.4,70.1 224.7,90.3"/>
<polyline fill="none" stroke="#1a30b0" stroke-width="1.01" stroke-opacity="1.0" stroke-linejoin="round" points="252.4,64.6 254.6,91.8"/>
<polyline fill="none" stroke="#1a30b0" stroke-width="0.91" stroke-opacity="1.0" stroke-linejoin="round" points="253.1,69.6 253.0,99.3"/>
<polyline fill="none" stroke="#2040b8" stroke-width="0.83" stroke-opacity="1.0" stroke-linejoin="round" points="239.8,71.6 243.1,102.0"/>
<polyline fill="none" stroke="#2040b8" stroke-width="0.94" stroke-opacity="1.0" stroke-linejoin="round" points="234.8,63.5 234.7,84.4"/>
<polyline fill="none" stroke="#1a30b0" stroke-width="1.04" stroke-opacity="1.0" stroke-linejoin="round" points="218.8,65.1 217.2,85.8"/>
<polyline fill="none" stroke="#2040b8" stroke-width="1.07" stroke-opacity="1.0" stroke-linejoin="round" points="204.8,68.8 207.1,105.2"/>
<polyline fill="none" stroke="#1a30b0" stroke-width="0.84" stroke-opacity="1.0" stroke-linejoin="round" points="226.3,67.8 229.3,104.5"/>
<polyline fill="none" stroke="#1a30b0" stroke-width="0.99" stroke-opacity="1.0" stroke-linejoin="round" points="262.5,63.5 261.7,106.9"/>
<polyline fill="none" stroke="#1a30b0" stroke-width="0.93" stroke-opacity="1.0" stroke-linejoin="round" points="232.9,65.4 235.1,86.2"/>
<polyline fill="none" stroke="#2040b8" stroke-width="1.04" stroke-opacity="1.0" stroke-linejoin="round" points="248.9,67.5 252.6,93.6"/>
<circle cx="193.8" cy="229.8" r="30.4" fill="#fff" stroke="#303030" stroke-width="1.1"/>
<polyline fill="none" stroke="#d848e0" stroke-width="3.3" stroke-linejoin="round" stroke-linecap="round" points="194.0,228.0 193.7,225.4 193.3,221.7 192.9,217.4 192.4,212.9 191.9,208.6 191.5,205.0 191.1,202.1 190.8,199.6 190.5,197.3 190.2,195.1 189.9,192.7 189.5,190.0 189.1,187.0 188.7,183.7 188.3,180.3 187.8,176.9 187.4,173.4 187.0,170.0 186.6,166.8 186.3,163.7 186.0,160.6 185.7,157.4 185.3,153.9 184.8,150.0 184.1,145.5 183.3,140.4 182.5,135.0 181.6,129.6 180.8,124.5 180.0,120.0 179.3,116.0 178.6,112.3 177.9,108.9 177.4,105.8 176.9,102.8 176.5,100.0 176.3,97.4 176.1,95.0 176.1,92.9 176.1,90.9 176.3,88.9 176.5,87.0 176.9,85.1 177.3,83.2 177.9,81.4 178.5,79.8 179.2,78.3 180.0,77.0 180.9,75.9 181.8,75.0 182.8,74.2 183.9,73.7 185.0,73.2 186.0,73.0 187.0,72.9 188.0,73.0 189.0,73.3 190.0,73.7 191.0,74.3 192.0,75.0 193.0,75.8 194.1,76.7 195.1,77.8 196.1,79.0 197.1,80.4 198.0,82.0 198.8,83.7 199.6,85.6 200.4,87.7 201.1,89.9 201.8,92.4 202.5,95.0 203.1,97.9 203.7,101.0 204.3,104.4 204.9,107.9 205.4,111.4 206.0,115.0 206.6,118.7 207.2,122.7 207.8,126.7 208.4,130.7 209.0,134.5 209.5,138.0 210.0,141.1 210.4,144.0 210.7,146.7 211.1,149.3 211.4,152.1 211.8,155.0 212.2,158.1 212.5,161.3 212.9,164.5 213.3,167.9 213.6,171.3 214.0,175.0 214.4,178.9 214.8,183.0 215.1,187.2 215.5,191.6 215.9,195.8 216.4,200.0 216.9,204.3 217.6,209.0 218.2,213.6 218.8,217.8 219.3,221.4 219.7,224.0"/>
<line x1="171.4" y1="229.5" x2="215.8" y2="229.5" stroke="#8070b0" stroke-width="1.3"/>
<line x1="193.8" y1="207.8" x2="193.8" y2="251.8" stroke="#8070b0" stroke-width="1.3"/>
</svg>
<div class="a" style="left:368px;top:301.5px;padding:1px 0 0 5px;width:70px;height:15px;background:#fff;font-size:13px;line-height:13px;color:#4a4a4a;font-weight:bold;white-space:nowrap">Zoom=2.4</div>
</div>
<div class="a chk" style="left:433px;top:0;width:14px;height:316px"></div>
<div class="a btn" style="left:433px;top:0;width:14px;height:14px"></div>
<div class="a btn" style="left:433px;top:81px;width:14px;height:118px"></div>
<div class="a btn" style="left:433px;top:302px;width:14px;height:14px"></div>
<div class="a chk" style="left:0;top:316px;width:433px;height:14px"></div>
<div class="a btn" style="left:0;top:316px;width:12px;height:14px"></div>
<div class="a btn" style="left:12px;top:316px;width:166px;height:14px"></div>
<div class="a btn" style="left:419px;top:316px;width:14px;height:14px"></div>
<div class="a" style="left:433px;top:316px;width:14px;height:14px;background:#d4d0c8"></div>
<svg class="a" style="left:0;top:0" width="1016" height="602">
<path d="M436.5 9.5 L440 5.5 L443.5 9.5Z" fill="#000"/>
<path d="M436.5 306 L440 310 L443.5 306Z" fill="#000"/>
<path d="M7 319.5 L3.5 323 L7 326.5Z" fill="#000"/>
<path d="M424 319.5 L427.5 323 L424 326.5Z" fill="#000"/>
</svg>
<div class="a" style="left:447px;top:0;width:5px;height:330px;background:#dcd9d2;border-left:1px solid #eeece6"></div>

<div class="a" style="left:452px;top:0;width:564px;height:330px;background:#d4d0c8"></div>
<div class="a" style="left:452px;top:0;width:3px;height:329px;background:#3a3a3a"></div>
<div class="a" style="left:452px;top:0;width:564px;height:1px;background:#000"></div>
<div class="a" style="left:452px;top:328px;width:564px;height:1.5px;background:#3a3a3a"></div>
<div class="a" style="left:455px;top:1px;width:561px;height:225px;background:#fff"></div>
<div class="a" style="left:455px;top:226px;width:561px;height:5px;background:#d4d0c8;border-top:1px solid #f4f2ee"></div>
<div class="a" style="left:452px;top:231px;width:564px;height:1.5px;background:#3a3a3a"></div>
<div class="a" style="left:455px;top:232.5px;width:561px;height:90px;background:#fff"></div>
<div class="a hc" style="left:455px;top:1px;width:110px;height:15px"></div>
<div class="a hc" style="left:565px;top:1px;width:75px;height:15px"></div>
<div class="a hc" style="left:640px;top:1px;width:54px;height:15px"></div>
<div class="a hc" style="left:694px;top:1px;width:54px;height:15px"></div>
<div class="a hc" style="left:748px;top:1px;width:54px;height:15px"></div>
<div class="a hc" style="left:802px;top:1px;width:54px;height:15px"></div>
<div class="a hc" style="left:856px;top:1px;width:54px;height:15px"></div>
<div class="a hc" style="left:910px;top:1px;width:54px;height:15px"></div>
<div class="a hc" style="left:964px;top:1px;width:36px;height:15px"></div>
<div class="a hc" style="left:1000px;top:1px;width:60px;height:15px"></div>
<div class="a tx" style="left:459px;top:3.8000000000000007px;letter-spacing:-0.3px">Division</div>
<div class="a tx" style="left:571px;top:3.8000000000000007px;letter-spacing:-0.3px">Start Time</div>
<div class="a tx r" style="right:327px;top:3.8000000000000007px;letter-spacing:-0.3px">Seconds</div>
<div class="a tx r" style="right:273px;top:3.8000000000000007px;letter-spacing:-0.3px">Distance</div>
<div class="a tx r" style="right:219px;top:3.8000000000000007px;letter-spacing:-0.3px">Speed</div>
<div class="a tx r" style="right:165px;top:3.8000000000000007px;letter-spacing:-0.3px">Direction</div>
<div class="a tx" style="left:862px;top:3.8000000000000007px;letter-spacing:-0.3px">Min Sp...</div>
<div class="a tx" style="left:916px;top:3.8000000000000007px;letter-spacing:-0.3px">Max Sp...</div>
<div class="a tx r" style="right:21px;top:3.8000000000000007px;letter-spacing:-0.3px">Run</div>
<div class="a tx" style="left:1009px;top:3.8000000000000007px;letter-spacing:-0.3px">Pe</div>
<div class="a tx" style="left:459px;top:17.00px;color:#000;letter-spacing:-0.3px">Alpha 500</div>
<div class="a tx" style="left:571px;top:17.00px;color:#000">21:16:51.000</div>
<div class="a tx r" style="right:327px;top:17.00px;color:#000">33.000</div>
<div class="a tx r" style="right:273px;top:17.00px;color:#000">479.49</div>
<div class="a tx r" style="right:219px;top:17.00px;color:#000">28.244</div>
<div class="a tx r" style="right:165px;top:17.00px;color:#000">0</div>
<div class="a tx r" style="right:111px;top:17.00px;color:#000">7.464</div>
<div class="a tx r" style="right:57px;top:17.00px;color:#000">36.583</div>
<div class="a tx r" style="right:21px;top:17.00px;color:#000">38</div>
<div class="a sel" style="left:456.5px;top:28.97px;width:559.5px;height:12.57px"></div>
<div class="a tx" style="left:459px;top:29.57px;color:#fff;letter-spacing:-0.3px">Alpha 500</div>
<div class="a tx" style="left:571px;top:29.57px;color:#fff">20:58:30.000</div>
<div class="a tx r" style="right:327px;top:29.57px;color:#fff">34.000</div>
<div class="a tx r" style="right:273px;top:29.57px;color:#fff">492.62</div>
<div class="a tx r" style="right:219px;top:29.57px;color:#fff">28.164</div>
<div class="a tx r" style="right:165px;top:29.57px;color:#fff">0</div>
<div class="a tx r" style="right:111px;top:29.57px;color:#fff">11.935</div>
<div class="a tx r" style="right:57px;top:29.57px;color:#fff">34.095</div>
<div class="a tx r" style="right:21px;top:29.57px;color:#fff">29</div>
<div class="a tx" style="left:459px;top:42.14px;color:#000;letter-spacing:-0.3px">Alpha 500</div>
<div class="a tx" style="left:571px;top:42.14px;color:#000">22:55:26.000</div>
<div class="a tx r" style="right:327px;top:42.14px;color:#000">34.000</div>
<div class="a tx r" style="right:273px;top:42.14px;color:#000">491.44</div>
<div class="a tx r" style="right:219px;top:42.14px;color:#000">28.097</div>
<div class="a tx r" style="right:165px;top:42.14px;color:#000">0</div>
<div class="a tx r" style="right:111px;top:42.14px;color:#000">14.112</div>
<div class="a tx r" style="right:57px;top:42.14px;color:#000">35.825</div>
<div class="a tx r" style="right:21px;top:42.14px;color:#000">68</div>
<div class="a tx" style="left:459px;top:54.71px;color:#000;letter-spacing:-0.3px">Alpha 500</div>
<div class="a tx" style="left:571px;top:54.71px;color:#000">23:38:26.000</div>
<div class="a tx r" style="right:327px;top:54.71px;color:#000">34.000</div>
<div class="a tx r" style="right:273px;top:54.71px;color:#000">489.24</div>
<div class="a tx r" style="right:219px;top:54.71px;color:#000">27.971</div>
<div class="a tx r" style="right:165px;top:54.71px;color:#000">0</div>
<div class="a tx r" style="right:111px;top:54.71px;color:#000">14.112</div>
<div class="a tx r" style="right:57px;top:54.71px;color:#000">35.086</div>
<div class="a tx r" style="right:21px;top:54.71px;color:#000">89</div>
<div class="a tx" style="left:459px;top:67.28px;color:#000;letter-spacing:-0.3px">Alpha 500</div>
<div class="a tx" style="left:571px;top:67.28px;color:#000">23:02:00.000</div>
<div class="a tx r" style="right:327px;top:67.28px;color:#000">34.000</div>
<div class="a tx r" style="right:273px;top:67.28px;color:#000">485.14</div>
<div class="a tx r" style="right:219px;top:67.28px;color:#000">27.736</div>
<div class="a tx r" style="right:165px;top:67.28px;color:#000">0</div>
<div class="a tx r" style="right:111px;top:67.28px;color:#000">12.363</div>
<div class="a tx r" style="right:57px;top:67.28px;color:#000">34.892</div>
<div class="a tx r" style="right:21px;top:67.28px;color:#000">72</div>
<div class="a tx" style="left:459px;top:79.85px;color:#000;letter-spacing:-0.3px">Alpha 500</div>
<div class="a tx" style="left:571px;top:79.85px;color:#000">00:06:26.000</div>
<div class="a tx r" style="right:327px;top:79.85px;color:#000">34.000</div>
<div class="a tx r" style="right:273px;top:79.85px;color:#000">471.3</div>
<div class="a tx r" style="right:219px;top:79.85px;color:#000">26.945</div>
<div class="a tx r" style="right:165px;top:79.85px;color:#000">0</div>
<div class="a tx r" style="right:111px;top:79.85px;color:#000">2.469</div>
<div class="a tx r" style="right:57px;top:79.85px;color:#000">34.717</div>
<div class="a tx r" style="right:21px;top:79.85px;color:#000">100</div>
<div class="a tx" style="left:459px;top:92.42px;color:#000;letter-spacing:-0.3px">Alpha 500</div>
<div class="a tx" style="left:571px;top:92.42px;color:#000">00:12:09.000</div>
<div class="a tx r" style="right:327px;top:92.42px;color:#000">35.000</div>
<div class="a tx r" style="right:273px;top:92.42px;color:#000">484.04</div>
<div class="a tx r" style="right:219px;top:92.42px;color:#000">26.883</div>
<div class="a tx r" style="right:165px;top:92.42px;color:#000">0</div>
<div class="a tx r" style="right:111px;top:92.42px;color:#000">15.298</div>
<div class="a tx r" style="right:57px;top:92.42px;color:#000">34.853</div>
<div class="a tx r" style="right:21px;top:92.42px;color:#000">105</div>
<div class="a tx" style="left:459px;top:104.99px;color:#000;letter-spacing:-0.3px">Alpha 500</div>
<div class="a tx" style="left:571px;top:104.99px;color:#000">00:14:58.000</div>
<div class="a tx r" style="right:327px;top:104.99px;color:#000">36.000</div>
<div class="a tx r" style="right:273px;top:104.99px;color:#000">489.93</div>
<div class="a tx r" style="right:219px;top:104.99px;color:#000">26.454</div>
<div class="a tx r" style="right:165px;top:104.99px;color:#000">0</div>
<div class="a tx r" style="right:111px;top:104.99px;color:#000">14.89</div>
<div class="a tx r" style="right:57px;top:104.99px;color:#000">32.423</div>
<div class="a tx r" style="right:21px;top:104.99px;color:#000">107</div>
<div class="a tx" style="left:459px;top:117.56px;color:#000;letter-spacing:-0.3px">Alpha 500</div>
<div class="a tx" style="left:571px;top:117.56px;color:#000">19:58:30.000</div>
<div class="a tx r" style="right:327px;top:117.56px;color:#000">37.000</div>
<div class="a tx r" style="right:273px;top:117.56px;color:#000">494.71</div>
<div class="a tx r" style="right:219px;top:117.56px;color:#000">25.99</div>
<div class="a tx r" style="right:165px;top:117.56px;color:#000">0</div>
<div class="a tx r" style="right:111px;top:117.56px;color:#000">11.294</div>
<div class="a tx r" style="right:57px;top:117.56px;color:#000">32.112</div>
<div class="a tx r" style="right:21px;top:117.56px;color:#000">5</div>
<div class="a tx" style="left:459px;top:130.13px;color:#000;letter-spacing:-0.3px">Alpha 500</div>
<div class="a tx" style="left:571px;top:130.13px;color:#000">23:12:36.000</div>
<div class="a tx r" style="right:327px;top:130.13px;color:#000">31.000</div>
<div class="a tx r" style="right:273px;top:130.13px;color:#000">382.73</div>
<div class="a tx r" style="right:219px;top:130.13px;color:#000">23.999</div>
<div class="a tx r" style="right:165px;top:130.13px;color:#000">0</div>
<div class="a tx r" style="right:111px;top:130.13px;color:#000">12.285</div>
<div class="a tx r" style="right:57px;top:130.13px;color:#000">32.346</div>
<div class="a tx r" style="right:21px;top:130.13px;color:#000">77</div>
<div class="a hc" style="left:455px;top:232.5px;width:35px;height:15px"></div>
<div class="a hc" style="left:490px;top:232.5px;width:63px;height:15px"></div>
<div class="a hc" style="left:553px;top:232.5px;width:72px;height:15px"></div>
<div class="a hc" style="left:625px;top:232.5px;width:46px;height:15px"></div>
<div class="a hc" style="left:671px;top:232.5px;width:53px;height:15px"></div>
<div class="a hc" style="left:724px;top:232.5px;width:54px;height:15px"></div>
<div class="a hc" style="left:778px;top:232.5px;width:30px;height:15px"></div>
<div class="a hc" style="left:808px;top:232.5px;width:54px;height:15px"></div>
<div class="a hc" style="left:862px;top:232.5px;width:36px;height:15px"></div>
<div class="a hc" style="left:898px;top:232.5px;width:54px;height:15px"></div>
<div class="a hc" style="left:952px;top:232.5px;width:54px;height:15px"></div>
<div class="a hc" style="left:1006px;top:232.5px;width:54px;height:15px"></div>
<div class="a tx" style="left:459px;top:235.3px;letter-spacing:-0.3px">Track</div>
<div class="a tx" style="left:496px;top:235.3px;letter-spacing:-0.3px">Date</div>
<div class="a tx" style="left:559px;top:235.3px;letter-spacing:-0.3px">Time</div>
<div class="a tx" style="left:631px;top:235.3px;letter-spacing:-0.3px">Seco...</div>
<div class="a tx r" style="right:297px;top:235.3px;letter-spacing:-0.3px">Distance</div>
<div class="a tx r" style="right:243px;top:235.3px;letter-spacing:-0.3px">Speed</div>
<div class="a tx" style="left:784px;top:235.3px;letter-spacing:-0.3px">Di...</div>
<div class="a tx r" style="right:159px;top:235.3px;letter-spacing:-0.3px">Invalid</div>
<div class="a tx r" style="right:123px;top:235.3px;letter-spacing:-0.3px">Sats</div>
<div class="a tx r" style="right:69px;top:235.3px;letter-spacing:-0.3px">Doppler</div>
<div class="a tx r" style="right:15px;top:235.3px;letter-spacing:-0.3px">Total Dist</div>
<div class="a tx" style="left:1012px;top:235.3px;letter-spacing:-0.3px">T</div>
<div class="a sel" style="left:456.5px;top:247.80px;width:559.5px;height:12.45px"></div>
<div class="a tx" style="left:459px;top:248.40px;color:#fff">4430</div>
<div class="a tx" style="left:496px;top:248.40px;color:#fff">2009-03-09</div>
<div class="a tx" style="left:559px;top:248.40px;color:#fff">20:58:46.000</div>
<div class="a tx r" style="right:350px;top:248.40px;color:#fff">1.000</div>
<div class="a tx r" style="right:297px;top:248.40px;color:#fff">10.64</div>
<div class="a tx r" style="right:243px;top:248.40px;color:#fff">20.685</div>
<div class="a tx r" style="right:213px;top:248.40px;color:#fff">66</div>
<div class="a tx r" style="right:123px;top:248.40px;color:#fff">8</div>
<div class="a tx r" style="right:69px;top:248.40px;color:#fff">18.214</div>
<div class="a tx r" style="right:15px;top:248.40px;color:#fff">17488.69</div>
<div class="a tx" style="left:1012px;top:248.40px;color:#fff">1</div>
<div class="a sel" style="left:456.5px;top:260.25px;width:559.5px;height:12.45px"></div>
<div class="a tx" style="left:459px;top:260.85px;color:#fff">4431</div>
<div class="a tx" style="left:496px;top:260.85px;color:#fff">2009-03-09</div>
<div class="a tx" style="left:559px;top:260.85px;color:#fff">20:58:47.000</div>
<div class="a tx r" style="right:350px;top:260.85px;color:#fff">1.000</div>
<div class="a tx r" style="right:297px;top:260.85px;color:#fff">9.25</div>
<div class="a tx r" style="right:243px;top:260.85px;color:#fff">17.977</div>
<div class="a tx r" style="right:213px;top:260.85px;color:#fff">109</div>
<div class="a tx r" style="right:123px;top:260.85px;color:#fff">8</div>
<div class="a tx r" style="right:69px;top:260.85px;color:#fff">11.935</div>
<div class="a tx r" style="right:15px;top:260.85px;color:#fff">17497.94</div>
<div class="a tx" style="left:1012px;top:260.85px;color:#fff">1</div>
<div class="a sel" style="left:456.5px;top:272.70px;width:559.5px;height:12.45px"></div>
<div class="a tx" style="left:459px;top:273.30px;color:#fff">4432</div>
<div class="a tx" style="left:496px;top:273.30px;color:#fff">2009-03-09</div>
<div class="a tx" style="left:559px;top:273.30px;color:#fff">20:58:48.000</div>
<div class="a tx r" style="right:350px;top:273.30px;color:#fff">1.000</div>
<div class="a tx r" style="right:297px;top:273.30px;color:#fff">13.22</div>
<div class="a tx r" style="right:243px;top:273.30px;color:#fff">25.698</div>
<div class="a tx r" style="right:213px;top:273.30px;color:#fff">164</div>
<div class="a tx r" style="right:159px;top:273.30px;color:#fff;letter-spacing:-0.3px">S</div>
<div class="a tx r" style="right:123px;top:273.30px;color:#fff">8</div>
<div class="a tx r" style="right:69px;top:273.30px;color:#fff">15.201</div>
<div class="a tx r" style="right:15px;top:273.30px;color:#fff">17511.16</div>
<div class="a tx" style="left:1012px;top:273.30px;color:#fff">1</div>
<div class="a sel" style="left:456.5px;top:285.15px;width:559.5px;height:12.45px"></div>
<div class="a tx" style="left:459px;top:285.75px;color:#fff">4433</div>
<div class="a tx" style="left:496px;top:285.75px;color:#fff">2009-03-09</div>
<div class="a tx" style="left:559px;top:285.75px;color:#fff">20:58:49.000</div>
<div class="a tx r" style="right:350px;top:285.75px;color:#fff">1.000</div>
<div class="a tx r" style="right:297px;top:285.75px;color:#fff">10.93</div>
<div class="a tx r" style="right:243px;top:285.75px;color:#fff">21.244</div>
<div class="a tx r" style="right:213px;top:285.75px;color:#fff">170</div>
<div class="a tx r" style="right:123px;top:285.75px;color:#fff">8</div>
<div class="a tx r" style="right:69px;top:285.75px;color:#fff">17.533</div>
<div class="a tx r" style="right:15px;top:285.75px;color:#fff">17522.09</div>
<div class="a sel" style="left:456.5px;top:297.60px;width:559.5px;height:12.45px"></div>
<div class="a tx" style="left:459px;top:298.20px;color:#fff">4434</div>
<div class="a tx" style="left:496px;top:298.20px;color:#fff">2009-03-09</div>
<div class="a tx" style="left:559px;top:298.20px;color:#fff">20:58:50.000</div>
<div class="a tx r" style="right:350px;top:298.20px;color:#fff">1.000</div>
<div class="a tx r" style="right:297px;top:298.20px;color:#fff">11.33</div>
<div class="a tx r" style="right:243px;top:298.20px;color:#fff">22.027</div>
<div class="a tx r" style="right:213px;top:298.20px;color:#fff">170</div>
<div class="a tx r" style="right:123px;top:298.20px;color:#fff">8</div>
<div class="a tx r" style="right:69px;top:298.20px;color:#fff">19.438</div>
<div class="a tx r" style="right:15px;top:298.20px;color:#fff">17533.42</div>
<div class="a chk" style="left:455px;top:309px;width:561px;height:13px"></div>
<div class="a btn" style="left:455.5px;top:309px;width:14px;height:13px;border-bottom:none"></div>
<div class="a btn" style="left:469.5px;top:309px;width:547px;height:13px;border-right:none;border-bottom:none"></div>
<svg class="a" style="left:0;top:0" width="1016" height="602"><path d="M464.5 312 L461 315.5 L464.5 319Z" fill="#000"/></svg>
<div class="a" style="left:455px;top:322px;width:561px;height:1.2px;background:#3a3a3a"></div>
<div class="a" style="left:455px;top:323.2px;width:561px;height:1px;background:#f4f2ee"></div>

<div class="a" style="left:0;top:330px;width:1016px;height:7px;background:#d4d0c8;border-top:1px solid #f2f0ea"></div>
<div class="a" style="left:0;top:337px;width:1016px;height:1.2px;background:#3a3a3a"></div>

<div class="a" style="left:0;top:338px;width:1016px;height:264px;background:#fff;overflow:hidden">
<svg width="1016" height="265" style="position:absolute;left:0;top:0">
<g transform="translate(0,-338)">
<line x1="11" y1="363.5" x2="1016" y2="363.5" stroke="#d4d4d4" stroke-width="1"/>
<line x1="11" y1="391.5" x2="1016" y2="391.5" stroke="#d4d4d4" stroke-width="1"/>
<line x1="11" y1="419.5" x2="1016" y2="419.5" stroke="#d4d4d4" stroke-width="1"/>
<line x1="11" y1="446.5" x2="1016" y2="446.5" stroke="#d4d4d4" stroke-width="1"/>
<line x1="11" y1="474.5" x2="1016" y2="474.5" stroke="#d4d4d4" stroke-width="1"/>
<line x1="11" y1="501.5" x2="1016" y2="501.5" stroke="#d4d4d4" stroke-width="1"/>
<line x1="11" y1="529.5" x2="1016" y2="529.5" stroke="#d4d4d4" stroke-width="1"/>
<line x1="3.5" y1="556.5" x2="1016" y2="556.5" stroke="#d4d4d4" stroke-width="1"/>
<polyline fill="none" stroke="#e0a060" stroke-width="1.2" points="0,474.6 5.6,500 16,474.6 218,474.6 223.6,488 229,474.6 327.6,474.6 332.3,488.5 337.8,488.5 342.5,474.6 842.6,474.6 849.3,487.9 853.9,487.9 858.6,474.6 865.2,486.6 869.9,474.6 1016,474.6"/>
<polyline fill="none" stroke="#447e44" stroke-width="1.05" points="0,583 8,583.2 15,582.4 22,583 40,583.6 60,583.4 75,582.8 90,583.6 110,583.6 140,583.4 160,582.8 180,583.6 220,583.5 245,583.2 265,583.6 280,582.3 287,584.2 316,584.3 325,581.6 330,579.7 337,578.4 345,578.5 350,579 352.6,580.4 361.6,561 371.5,539.5 378.2,519.6 389,506.3 396.4,486.3 401.4,474.7 409.7,463 419.7,443 428,431.5 438,418.9 443,416 449.6,414 456.2,411.6 466.1,409.3 471,411 479.4,409.3 486,405 490,403.7 498.7,399.9 508.6,397.9 512.4,399.2 517.9,396.7 527.3,401.2 536,407.4 539.8,408.9 549.2,404.9 554.7,422.3 562.2,467.2 570.2,518.2 579.6,487.1 589.6,464.7 599.6,446 607,441 614.5,433.5 624.5,427.3 632,423.6 641.9,416.1 651.9,409.9 658.1,409.1 664.3,414.9 671.8,424.8 683.3,434.9 694.9,444.9 703.2,441.5 713.2,437.2 719.8,443.2 729.8,440.9 739.7,444.9 748,456.5 757,468.1 763,486.4 771.3,513 777.9,539.5 782.3,562.8 786.9,550.2 792.2,582.7 802.9,575.1 809.5,582 817.8,580.4 832.8,582 839.4,577.1 849.4,581.7 860,581 880,582.6 900,583.7 935,583 945,582 958,581.5 970,583 978,581 983,583 990,584 1000,583 1016,581.5"/>
<rect x="481" y="338" width="177" height="247.5" fill="#ffb0ff"/>
<clipPath id="pk"><rect x="481" y="338" width="177" height="247.5"/></clipPath>
<g clip-path="url(#pk)">
<line x1="12" y1="363.5" x2="1016" y2="363.5" stroke="#f2a4f2" stroke-width="1"/>
<line x1="12" y1="391.5" x2="1016" y2="391.5" stroke="#f2a4f2" stroke-width="1"/>
<line x1="12" y1="419.5" x2="1016" y2="419.5" stroke="#f2a4f2" stroke-width="1"/>
<line x1="12" y1="446.5" x2="1016" y2="446.5" stroke="#f2a4f2" stroke-width="1"/>
<line x1="12" y1="474.5" x2="1016" y2="474.5" stroke="#f2a4f2" stroke-width="1"/>
<line x1="12" y1="501.5" x2="1016" y2="501.5" stroke="#f2a4f2" stroke-width="1"/>
<line x1="12" y1="529.5" x2="1016" y2="529.5" stroke="#f2a4f2" stroke-width="1"/>
<line x1="12" y1="556.5" x2="1016" y2="556.5" stroke="#f2a4f2" stroke-width="1"/>
<line x1="0" y1="474.6" x2="1016" y2="474.6" stroke="#e89060" stroke-width="1.2"/>
<polyline fill="none" stroke="#7a467a" stroke-width="1.1" points="0,583 8,583.2 15,582.4 22,583 40,583.6 60,583.4 75,582.8 90,583.6 110,583.6 140,583.4 160,582.8 180,583.6 220,583.5 245,583.2 265,583.6 280,582.3 287,584.2 316,584.3 325,581.6 330,579.7 337,578.4 345,578.5 350,579 352.6,580.4 361.6,561 371.5,539.5 378.2,519.6 389,506.3 396.4,486.3 401.4,474.7 409.7,463 419.7,443 428,431.5 438,418.9 443,416 449.6,414 456.2,411.6 466.1,409.3 471,411 479.4,409.3 486,405 490,403.7 498.7,399.9 508.6,397.9 512.4,399.2 517.9,396.7 527.3,401.2 536,407.4 539.8,408.9 549.2,404.9 554.7,422.3 562.2,467.2 570.2,518.2 579.6,487.1 589.6,464.7 599.6,446 607,441 614.5,433.5 624.5,427.3 632,423.6 641.9,416.1 651.9,409.9 658.1,409.1 664.3,414.9 671.8,424.8 683.3,434.9 694.9,444.9 703.2,441.5 713.2,437.2 719.8,443.2 729.8,440.9 739.7,444.9 748,456.5 757,468.1 763,486.4 771.3,513 777.9,539.5 782.3,562.8 786.9,550.2 792.2,582.7 802.9,575.1 809.5,582 817.8,580.4 832.8,582 839.4,577.1 849.4,581.7 860,581 880,582.6 900,583.7 935,583 945,582 958,581.5 970,583 978,581 983,583 990,584 1000,583 1016,581.5"/>
</g>
<line x1="481.5" y1="338" x2="481.5" y2="585.5" stroke="#9070c0" stroke-width="1.2"/>
</g></svg>
<div class="a gl" style="left:-5px;top:19.0px;letter-spacing:0.4px;color:#c4c4c4">40</div>
<div class="a gl" style="left:-5px;top:47.0px;letter-spacing:0.4px;color:#c4c4c4">35</div>
<div class="a gl" style="left:-5px;top:75.0px;letter-spacing:0.4px;color:#c4c4c4">30</div>
<div class="a gl" style="left:-5px;top:102.0px;letter-spacing:0.4px;color:#c4c4c4">25</div>
<div class="a gl" style="left:-5px;top:130.0px;letter-spacing:0.4px;color:#c4c4c4">20</div>
<div class="a gl" style="left:-5px;top:157.0px;letter-spacing:0.4px;color:#c4c4c4"><i style='visibility:hidden'>1</i>5</div>
<div class="a gl" style="left:-5px;top:185.0px;letter-spacing:0.4px;color:#c4c4c4"><i style='visibility:hidden'>1</i>0</div>
<div class="a gl" style="left:-5px;top:212.0px;letter-spacing:0.4px;color:#c4c4c4">5</div>
<div class="a" style="left:16.5px;top:248.5px;width:1px;height:14px;background:#c8c8c8"></div>
<div class="a gl" style="left:19.3px;top:250.29999999999995px;letter-spacing:-0.5px">20:57</div>
<div class="a" style="left:327.3px;top:248.5px;width:1px;height:14px;background:#c8c8c8"></div>
<div class="a gl" style="left:330.1px;top:250.29999999999995px;letter-spacing:-0.5px">20:58</div>
<div class="a" style="left:637.5px;top:248.5px;width:1px;height:14px;background:#c8c8c8"></div>
<div class="a gl" style="left:640.3px;top:250.29999999999995px;letter-spacing:-0.5px">20:59</div>
<div class="a" style="left:947.9px;top:248.5px;width:1px;height:14px;background:#c8c8c8"></div>
<div class="a gl" style="left:950.6999999999999px;top:250.29999999999995px;letter-spacing:-0.5px">21:00</div>
</div>
<div class="a chk" style="left:0;top:600px;width:1016px;height:2px"></div>
<div class="a" style="left:0;top:600px;width:8px;height:2px;background:#f4f2ee;border-top:1px solid #808080"></div>
<div class="a" style="left:12px;top:600px;width:294px;height:2px;background:#d4d0c8;border-top:1px solid #f4f2ee"></div>
<div class="a" style="left:290px;top:600px;width:16px;height:1px;background:#909090"></div>
<div class="a" style="left:305px;top:599.5px;width:1.5px;height:2.5px;background:#202020"></div>
<svg class="a" style="left:0;top:0" width="1016" height="602"><path d="M9 599.5 L6.5 602 L11.5 602Z" fill="#000"/></svg>

</div></body></html>
